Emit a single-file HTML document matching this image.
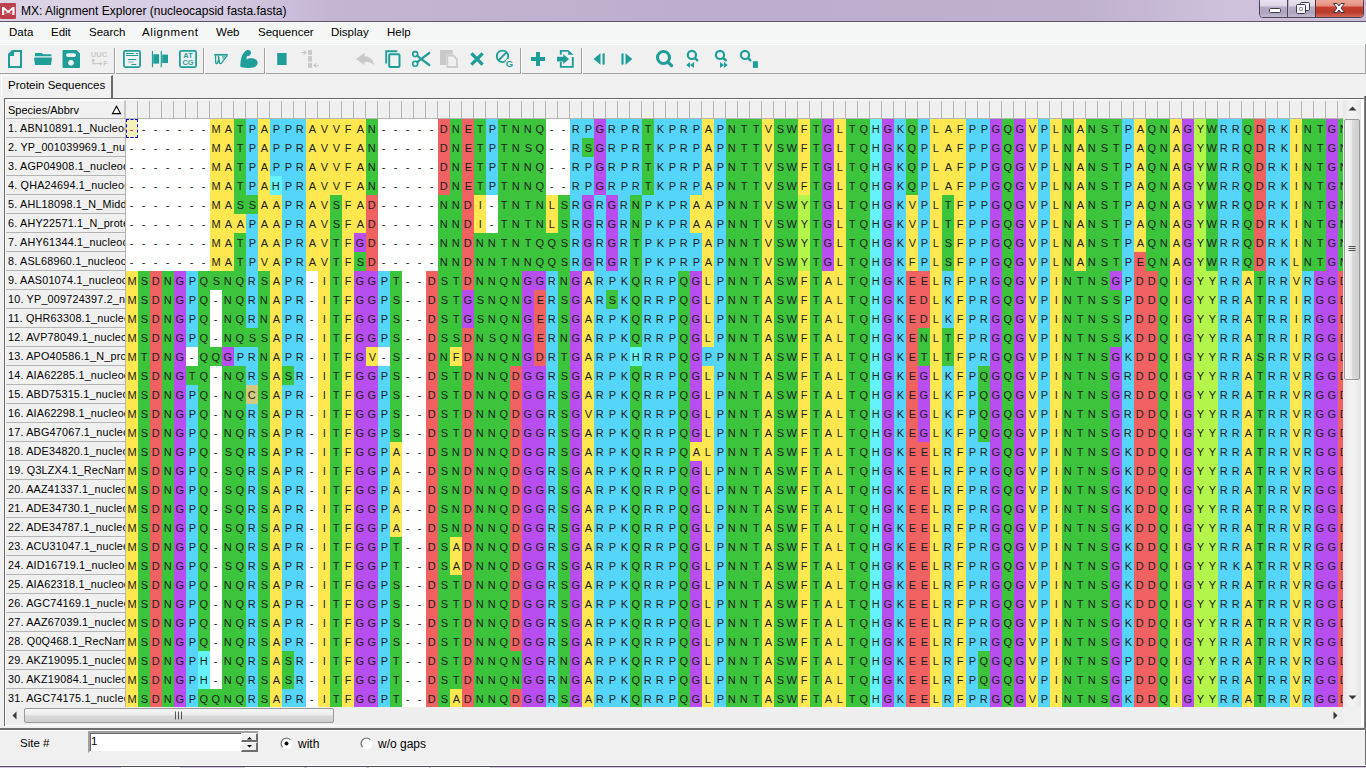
<!DOCTYPE html>
<html><head><meta charset="utf-8">
<style>
*{box-sizing:border-box}
html,body{margin:0;padding:0}
body{width:1366px;height:768px;overflow:hidden;background:#F0F0F0;position:relative;font-family:"Liberation Sans",sans-serif;color:#000}
.abs{position:absolute}
#title{left:0;top:0;width:1366px;height:22px;background:linear-gradient(90deg,#ddd4e6 0,#d6cce2 220px,#c4b5d4 330px,#bdaecf 700px,#bfb0d0 1080px,#cec2db 1230px,#c9bdd9 1366px);border-bottom:1px solid #5a5868}
#ttext{left:21px;top:4px;font-size:12px;white-space:nowrap}
#menu{left:0;top:22px;width:1366px;height:22px;background:#F5F7F7}
#menu span{position:absolute;top:4px;font-size:11.5px;white-space:nowrap}
#tool{left:0;top:44px;width:1366px;height:30px;background:#F0F0F0;border-top:1px solid #fff;border-bottom:1px solid #A0A0A0}
.sep{position:absolute;top:3px;width:2px;height:26px;border-left:1px solid #A0A0A0;border-right:1px solid #fff}
#tabs{left:0;top:74px;width:1366px;height:24px;background:#F0F0F0}
#tab{left:1px;top:75px;width:112px;height:23px;background:#F0F0F0;border-left:1px solid #fff;border-top:1px solid #fff;border-right:2px solid #696969}
#tabtxt{left:8px;top:79px;font-size:11.5px;white-space:nowrap}
#frame{left:4px;top:98px;width:1360px;height:628px;border-top:1px solid #696969;border-left:1px solid #696969;background:#fff}
#hdr{left:6px;top:100px;width:1337px;height:19px;background:#F0F0F0;border-bottom:1px solid #B4B4B4}
#hdrcells b{position:absolute;top:1px;width:1px;height:17px;background:#B4B4B4}
#hdrcells{left:126px;top:100px;width:1217px;height:18px;overflow:hidden}
#labhdr{left:6px;top:100px;width:120px;height:18px;border-top:1px solid #fff;border-right:2px solid #C8C8C8}
#labhdrtxt{left:8px;top:104px;font-size:11px;white-space:nowrap}
#grid{left:126px;top:119px;width:1217px;height:588px;overflow:hidden}
.row{position:absolute;left:0;height:19px;width:1224px;white-space:nowrap;font-size:10px;line-height:22px}
.row i{font-style:normal;display:inline-block;width:12px;height:19px;text-align:center;vertical-align:top}
.row b{font-weight:normal;display:inline-block;transform:scaleX(1.1);color:#1e1e1e}
.y{background:#FFE84F}.g{background:#3DC43D}.c{background:#55D5FA}.h{background:#66F2FA}.r{background:#F06262}.p{background:#B84EF0}.l{background:#B4F54B}.k{background:#D2CA7C}.w{background:#fff}
.row i.sel{background:#F4F2B8;outline:1px dashed #0000F0;outline-offset:-1px}
.row i.sel b{color:#f00}
#labs{left:6px;top:119px;width:120px;height:588px;overflow:hidden}
.lab{position:absolute;left:0;width:120px;height:19px;background:#F0F0F0;border-bottom:1px solid #B4B4B4;border-right:1px solid #B4B4B4;font-size:10.8px;line-height:19px;padding-left:2px;letter-spacing:0.2px;white-space:nowrap;overflow:hidden}
#vs{left:1343px;top:100px;width:18px;height:607px;background:linear-gradient(90deg,#e6e6e6,#f2f2f2 40%,#f2f2f2 60%,#e6e6e6)}
#hs{left:6px;top:707px;width:1355px;height:18px;background:#EEEEEE}
#bottomsep{left:0;top:728px;width:1366px;height:3px;border-top:2px solid #6e6e6e;border-bottom:1px solid #fff}
#sitetxt{left:20px;top:737px;font-size:11.5px}
#sitebox{left:88px;top:731px;width:171px;height:22px;background:#fff;border:2px solid;border-color:#a0a0a0 #f0f0f0 #f0f0f0 #a0a0a0;box-shadow:inset 1px 1px 0 #696969}
#sitev{left:91px;top:735px;font-size:11.5px}
</style></head><body>
<div id="title" class="abs"></div>
<div class="abs" style="left:0;top:3px;width:16px;height:16px;background:#BF404D;border-radius:1px"></div>
<svg class="abs" style="left:0;top:3px" width="16" height="16" viewBox="0 0 16 16"><path d="M2,4 H4.2 V12 H2 Z M12.3,4 H14.5 V12 H12.3 Z" fill="#fff"/><path d="M3.3,4.6 L8.2,9 L13.2,4.6" fill="none" stroke="#fff" stroke-width="1.7"/><path d="M5.6,10.5 L8.2,9 L10.8,10.5" fill="none" stroke="#f4d8dc" stroke-width="0.9"/></svg>
<div class="abs" style="left:1259px;top:-3px;width:105px;height:21px;border:1px solid #4a4656;border-radius:4px;overflow:hidden;background:#bcb2cc">
<div class="abs" style="left:0;top:0;width:28px;height:20px;background:linear-gradient(#ebe6f0 0,#ddd6e6 40%,#b5abc4 45%,#aea4bf 75%,#c9c0d6 100%);border-right:1px solid #4a4656"></div>
<div class="abs" style="left:29px;top:0;width:27px;height:20px;background:linear-gradient(#ebe6f0 0,#ddd6e6 40%,#b5abc4 45%,#aea4bf 75%,#c9c0d6 100%);border-right:1px solid #5a3030"></div>
<div class="abs" style="left:56px;top:0;width:48px;height:20px;background:linear-gradient(#f0b0a0 0,#e49080 40%,#c84030 45%,#b83a2a 70%,#d87060 100%)"></div>
</div>
<svg class="abs" style="left:1260px;top:0" width="106" height="20" viewBox="0 0 106 20">
<rect x="9.5" y="8.5" width="11" height="4" rx="1" fill="#fff" stroke="#3c3a4a" stroke-width="1"/>
<rect x="40.5" y="2.5" width="9" height="8" rx="1" fill="#f4f2f8" stroke="#3c3a4a" stroke-width="1"/>
<rect x="36.5" y="4.5" width="9" height="9" rx="1" fill="#f4f2f8" stroke="#3c3a4a" stroke-width="1"/>
<rect x="39.5" y="7.5" width="3" height="3" fill="#3c3a4a" stroke="none"/>
<rect x="40" y="8" width="2" height="2" fill="#f4f2f8"/>
<path d="M73.5,3.5 H77 L79,6 L81,3.5 H84.5 L81,8 L84.5,12.5 H81 L79,10 L77,12.5 H73.5 L77,8 Z" fill="#fff" stroke="#3c3a4a" stroke-width="1" stroke-linejoin="round"/>
</svg>
<div id="ttext" class="abs">MX: Alignment Explorer (nucleocapsid fasta.fasta)</div>

<div id="menu" class="abs">
<span style="left:9px">Data</span><span style="left:51px">Edit</span><span style="left:89px">Search</span><span style="left:142px;letter-spacing:0.6px">Alignment</span><span style="left:216px">Web</span><span style="left:258px">Sequencer</span><span style="left:331px">Display</span><span style="left:387px">Help</span>
</div>
<div id="tool" class="abs">
<div class="sep" style="left:114px"></div><div class="sep" style="left:203px"></div><div class="sep" style="left:264px"></div><div class="sep" style="left:520px"></div><div class="sep" style="left:581px"></div>
</div>
<svg class="abs" style="left:0;top:0" width="780" height="74" viewBox="0 0 780 74">
<g fill="#1F9E99" stroke="none">
<path fill-rule="evenodd" d="M8,54 L12,50 H22 V68 H8 Z M10,56 H14 V52 H20 V66 H10 Z"/>
<path d="M35,53 H42 L43,54.2 H50.5 Q51.5,54.2 51.5,55.2 V56.3 H35 Z"/>
<path d="M34,57.6 H52 L51,65 H35 Z"/>
<path fill-rule="evenodd" d="M62.5,51 Q62.5,50 63.5,50 H76.5 L80,53.5 V67 Q80,68 79,68 H63.5 Q62.5,68 62.5,67 Z M68,53.2 H74 Q76,53.2 76,55.1 Q76,57 74,57 H68 Q66,57 66,55.1 Q66,53.2 68,53.2 Z M71,60 A2.9,2.9 0 1 0 71.01,60 Z"/>
</g>
<g fill="none" stroke="#1F9E99">
<rect x="123.9" y="50.9" width="16.2" height="16.2" rx="1.5" stroke-width="1.8"/>
<path d="M126.6,53.5 H133.4 M136.4,53.5 H137.8 M126.6,55.5 H137.8 M128.4,59.5 H135.8 M132,64.5 H135.8" stroke-width="1.2" stroke-linecap="round"/>
<path d="M128.4,62 H133.6" stroke-width="1.2" stroke="#7cc3bf"/>
<rect x="179.9" y="50.9" width="16.2" height="16.2" rx="1.5" stroke-width="1.8"/>
<path d="M152.5,51.3 V66.7 M161.3,51.3 V66.7" stroke-width="1.2" stroke-linecap="round"/>
</g>
<g fill="#1F9E99">
<rect x="153.3" y="54.2" width="5.8" height="9.4"/>
<rect x="162.2" y="54.6" width="5.8" height="8.4"/>
<text x="188" y="57.9" font-family="Liberation Sans" font-weight="bold" font-size="7.4" text-anchor="middle">AT</text>
<text x="188" y="65.2" font-family="Liberation Sans" font-weight="bold" font-size="7.4" text-anchor="middle">CG</text>
<path d="M214.2,54.8 H227.8" stroke="#1F9E99" stroke-width="1.7"/><path d="M215.5,55.5 L215.7,63 Q216.2,63.9 217.1,63.5 L218.7,59.8 L219.5,63.3 Q220.3,63.9 221.2,63.3 L227.2,55.6" fill="none" stroke="#1F9E99" stroke-width="1.3" stroke-linejoin="round"/><path d="M218.4,56 L219.3,62.5" stroke="#1F9E99" stroke-width="1.5"/><path d="M221.8,55.6 H226.3 L222.8,60 Z" fill="#6fbdb9"/>
<path d="M240.3,66.5 C240.5,60 241.5,55 244.5,52 C245.8,50.6 247,50 248.3,50 C250,50 251,51 251,52.6 C251,54.2 250.3,55.5 248.8,55.9 L246.8,56.3 L246.5,59.8 C247.2,58.9 248.2,58.3 249.5,58.2 C254,57.8 257.6,59.5 257.6,62.8 C257.6,66.2 254.5,67.8 249,67.9 C245,68 242,67.6 240.3,66.5 Z"/>
<rect x="277.2" y="53" width="9.4" height="12"/>
</g>
<g fill="#C9C9C9">
<text x="99" y="56.8" font-family="Liberation Sans" font-weight="bold" font-size="7.6" text-anchor="middle">UUC</text>
<text x="105.5" y="65.6" font-family="Liberation Sans" font-weight="bold" font-size="7.3" text-anchor="middle">F</text>
<path d="M93.1,58.2 L91,61 H92.4 V64.3 H100 V65.8 L102.6,63.6 L100,61.4 V62.9 H93.8 V61 H95.2 Z"/>
<rect x="308" y="50" width="4" height="4.8"/><rect x="308" y="56.1" width="4" height="5.5"/><rect x="308" y="62.9" width="4" height="4.9"/>
<path d="M301,52 H304.5 L303,50.6 L304,50.2 L306.9,52.5 L304,54.8 L303,54.4 L304.5,53 H301 Z"/>
<path d="M319,64.9 H315.5 L317,63.5 L316,63.1 L313,65.4 L316,67.7 L317,67.3 L315.5,65.9 H319 Z"/>
<path d="M356,59 L364.5,52.8 V56.2 C369,56.2 373.5,59 374,65 C371.5,62.5 368,62 364.5,62 V65 Z"/>
<path d="M440,50 H452.8 V54.5 H446.4 V65.1 H440 Z"/>
</g>
<g fill="none" stroke="#CDCDCD" stroke-width="1.8">
<path d="M447.3,55.5 H453.5 L457,59 V67 H447.3 Z"/>
</g>
<g fill="none" stroke="#1F9E99">
<path d="M386.2,62.8 V51.2 H396.5" stroke-width="1.9" stroke-linecap="round"/>
<rect x="389.2" y="54.3" width="10.3" height="12.6" rx="1" stroke-width="2"/>
<circle cx="415.2" cy="54.1" r="2.5" stroke-width="1.6"/>
<circle cx="415.2" cy="63.8" r="2.5" stroke-width="1.6"/>
<path d="M417.3,55.7 L421,59 L429.3,65 M417.3,62.2 L421,59 L429.3,53" stroke-width="2.2" stroke-linecap="round"/>
<path d="M472.5,54.5 L481.5,63.5 M481.5,54.5 L472.5,63.5" stroke-width="3.2" stroke-linecap="square"/>
<circle cx="502.5" cy="56.3" r="5.75" stroke-width="1.8"/>
<path d="M498.8,60 L506.2,52.6" stroke-width="1.8"/>
<path d="M531,59 H545 M538,52 V66" stroke-width="4"/>
<path d="M560.8,54.8 V50.9 H568.5 M572.8,57 V66.9 H560.8 V62" stroke-width="1.9"/>
<circle cx="663.5" cy="57.5" r="6" stroke-width="3.1"/>
<path d="M667.8,62 L671.6,65.6" stroke-width="3.2" stroke-linecap="round"/>
<circle cx="691.9" cy="54.9" r="4.1" stroke-width="2.2"/>
<path d="M695,58.2 L697.3,60.3" stroke-width="2.4" stroke-linecap="round"/>
<circle cx="720" cy="54.9" r="4.1" stroke-width="2.2"/>
<path d="M723.1,58.2 L725.9,60.3" stroke-width="2.4" stroke-linecap="round"/>
<circle cx="745" cy="54.9" r="4.1" stroke-width="2.2"/>
<path d="M748.1,58.2 L750.3,60.3" stroke-width="2.4" stroke-linecap="round"/>
</g>
<g fill="#1F9E99">
<path d="M568.2,50 L573.6,54.8 H568.2 Z"/>
<path d="M557,56.8 H563.3 V54.2 L569,59.1 L563.3,64 V61.6 H557 Z"/>
<path d="M593.5,59 L600.5,53.3 V64.7 Z"/><rect x="602.5" y="53.3" width="2.2" height="11.4" rx="1"/>
<path d="M632.3,59 L625.5,53.3 V64.7 Z"/><rect x="621.4" y="53.3" width="2.2" height="11.4" rx="1"/>
<path d="M686.2,65 L690,62 V68 Z M690,65 L694,62 V68 Z"/>
<path d="M727.7,65 L724,62 V68 Z M724,65 L720,62 V68 Z"/>
<rect x="752.9" y="61.2" width="5" height="6.7"/>
<circle cx="509.3" cy="62.6" r="3.9" fill="#F0F0F0"/>
<text x="509.4" y="66.6" font-family="Liberation Sans" font-weight="bold" font-size="9.5" text-anchor="middle">G</text>
</g>
</svg>
<div id="tabs" class="abs"></div>
<div id="tab" class="abs"></div>
<div id="tabtxt" class="abs">Protein Sequences</div>

<div id="frame" class="abs"></div>
<div id="hdr" class="abs"></div>
<div id="hdrcells" class="abs"><div style="position:relative;height:18px"><b style="left:11px"></b><b style="left:23px"></b><b style="left:35px"></b><b style="left:47px"></b><b style="left:59px"></b><b style="left:71px"></b><b style="left:83px"></b><b style="left:95px"></b><b style="left:107px"></b><b style="left:119px"></b><b style="left:131px"></b><b style="left:143px"></b><b style="left:155px"></b><b style="left:167px"></b><b style="left:179px"></b><b style="left:191px"></b><b style="left:203px"></b><b style="left:215px"></b><b style="left:227px"></b><b style="left:239px"></b><b style="left:251px"></b><b style="left:263px"></b><b style="left:275px"></b><b style="left:287px"></b><b style="left:299px"></b><b style="left:311px"></b><b style="left:323px"></b><b style="left:335px"></b><b style="left:347px"></b><b style="left:359px"></b><b style="left:371px"></b><b style="left:383px"></b><b style="left:395px"></b><b style="left:407px"></b><b style="left:419px"></b><b style="left:431px"></b><b style="left:443px"></b><b style="left:455px"></b><b style="left:467px"></b><b style="left:479px"></b><b style="left:491px"></b><b style="left:503px"></b><b style="left:515px"></b><b style="left:527px"></b><b style="left:539px"></b><b style="left:551px"></b><b style="left:563px"></b><b style="left:575px"></b><b style="left:587px"></b><b style="left:599px"></b><b style="left:611px"></b><b style="left:623px"></b><b style="left:635px"></b><b style="left:647px"></b><b style="left:659px"></b><b style="left:671px"></b><b style="left:683px"></b><b style="left:695px"></b><b style="left:707px"></b><b style="left:719px"></b><b style="left:731px"></b><b style="left:743px"></b><b style="left:755px"></b><b style="left:767px"></b><b style="left:779px"></b><b style="left:791px"></b><b style="left:803px"></b><b style="left:815px"></b><b style="left:827px"></b><b style="left:839px"></b><b style="left:851px"></b><b style="left:863px"></b><b style="left:875px"></b><b style="left:887px"></b><b style="left:899px"></b><b style="left:911px"></b><b style="left:923px"></b><b style="left:935px"></b><b style="left:947px"></b><b style="left:959px"></b><b style="left:971px"></b><b style="left:983px"></b><b style="left:995px"></b><b style="left:1007px"></b><b style="left:1019px"></b><b style="left:1031px"></b><b style="left:1043px"></b><b style="left:1055px"></b><b style="left:1067px"></b><b style="left:1079px"></b><b style="left:1091px"></b><b style="left:1103px"></b><b style="left:1115px"></b><b style="left:1127px"></b><b style="left:1139px"></b><b style="left:1151px"></b><b style="left:1163px"></b><b style="left:1175px"></b><b style="left:1187px"></b><b style="left:1199px"></b><b style="left:1211px"></b><b style="left:1223px"></b></div></div>
<div id="labhdr" class="abs"></div>
<div id="labhdrtxt" class="abs">Species/Abbrv</div>
<svg class="abs" style="left:111px;top:105px" width="12" height="10" viewBox="0 0 12 10"><path d="M5.5 1.2 1.5 8.6h8z" fill="#fff" stroke="#000" stroke-width="1.1"/></svg>
<div id="grid" class="abs">
<div class="row" style="top:0px"><i class="sel"><b>-</b></i><i class="w"><b>-</b></i><i class="w"><b>-</b></i><i class="w"><b>-</b></i><i class="w"><b>-</b></i><i class="w"><b>-</b></i><i class="w"><b>-</b></i><i class="y"><b>M</b></i><i class="y"><b>A</b></i><i class="g"><b>T</b></i><i class="c"><b>P</b></i><i class="y"><b>A</b></i><i class="c"><b>P</b></i><i class="c"><b>P</b></i><i class="c"><b>R</b></i><i class="y"><b>A</b></i><i class="y"><b>V</b></i><i class="y"><b>V</b></i><i class="y"><b>F</b></i><i class="y"><b>A</b></i><i class="g"><b>N</b></i><i class="w"><b>-</b></i><i class="w"><b>-</b></i><i class="w"><b>-</b></i><i class="w"><b>-</b></i><i class="w"><b>-</b></i><i class="r"><b>D</b></i><i class="g"><b>N</b></i><i class="r"><b>E</b></i><i class="g"><b>T</b></i><i class="c"><b>P</b></i><i class="g"><b>T</b></i><i class="g"><b>N</b></i><i class="g"><b>N</b></i><i class="g"><b>Q</b></i><i class="w"><b>-</b></i><i class="w"><b>-</b></i><i class="c"><b>R</b></i><i class="c"><b>P</b></i><i class="p"><b>G</b></i><i class="c"><b>R</b></i><i class="c"><b>P</b></i><i class="c"><b>R</b></i><i class="g"><b>T</b></i><i class="c"><b>K</b></i><i class="c"><b>P</b></i><i class="c"><b>R</b></i><i class="c"><b>P</b></i><i class="y"><b>A</b></i><i class="c"><b>P</b></i><i class="g"><b>N</b></i><i class="g"><b>T</b></i><i class="g"><b>T</b></i><i class="y"><b>V</b></i><i class="g"><b>S</b></i><i class="g"><b>W</b></i><i class="y"><b>F</b></i><i class="g"><b>T</b></i><i class="p"><b>G</b></i><i class="y"><b>L</b></i><i class="g"><b>T</b></i><i class="g"><b>Q</b></i><i class="h"><b>H</b></i><i class="p"><b>G</b></i><i class="c"><b>K</b></i><i class="g"><b>Q</b></i><i class="c"><b>P</b></i><i class="y"><b>L</b></i><i class="y"><b>A</b></i><i class="y"><b>F</b></i><i class="c"><b>P</b></i><i class="c"><b>P</b></i><i class="p"><b>G</b></i><i class="g"><b>Q</b></i><i class="p"><b>G</b></i><i class="y"><b>V</b></i><i class="c"><b>P</b></i><i class="y"><b>L</b></i><i class="g"><b>N</b></i><i class="y"><b>A</b></i><i class="g"><b>N</b></i><i class="g"><b>S</b></i><i class="g"><b>T</b></i><i class="c"><b>P</b></i><i class="y"><b>A</b></i><i class="g"><b>Q</b></i><i class="g"><b>N</b></i><i class="y"><b>A</b></i><i class="p"><b>G</b></i><i class="l"><b>Y</b></i><i class="g"><b>W</b></i><i class="c"><b>R</b></i><i class="c"><b>R</b></i><i class="g"><b>Q</b></i><i class="r"><b>D</b></i><i class="c"><b>R</b></i><i class="c"><b>K</b></i><i class="y"><b>I</b></i><i class="g"><b>N</b></i><i class="g"><b>T</b></i><i class="p"><b>G</b></i><i class="g"><b>N</b></i></div>
<div class="row" style="top:19px"><i class="w"><b>-</b></i><i class="w"><b>-</b></i><i class="w"><b>-</b></i><i class="w"><b>-</b></i><i class="w"><b>-</b></i><i class="w"><b>-</b></i><i class="w"><b>-</b></i><i class="y"><b>M</b></i><i class="y"><b>A</b></i><i class="g"><b>T</b></i><i class="c"><b>P</b></i><i class="y"><b>A</b></i><i class="c"><b>P</b></i><i class="c"><b>P</b></i><i class="c"><b>R</b></i><i class="y"><b>A</b></i><i class="y"><b>V</b></i><i class="y"><b>V</b></i><i class="y"><b>F</b></i><i class="y"><b>A</b></i><i class="g"><b>N</b></i><i class="w"><b>-</b></i><i class="w"><b>-</b></i><i class="w"><b>-</b></i><i class="w"><b>-</b></i><i class="w"><b>-</b></i><i class="r"><b>D</b></i><i class="g"><b>N</b></i><i class="r"><b>E</b></i><i class="g"><b>T</b></i><i class="c"><b>P</b></i><i class="g"><b>T</b></i><i class="g"><b>N</b></i><i class="g"><b>S</b></i><i class="g"><b>Q</b></i><i class="w"><b>-</b></i><i class="w"><b>-</b></i><i class="c"><b>R</b></i><i class="g"><b>S</b></i><i class="p"><b>G</b></i><i class="c"><b>R</b></i><i class="c"><b>P</b></i><i class="c"><b>R</b></i><i class="g"><b>T</b></i><i class="c"><b>K</b></i><i class="c"><b>P</b></i><i class="c"><b>R</b></i><i class="c"><b>P</b></i><i class="y"><b>A</b></i><i class="c"><b>P</b></i><i class="g"><b>N</b></i><i class="g"><b>T</b></i><i class="g"><b>T</b></i><i class="y"><b>V</b></i><i class="g"><b>S</b></i><i class="g"><b>W</b></i><i class="y"><b>F</b></i><i class="g"><b>T</b></i><i class="p"><b>G</b></i><i class="y"><b>L</b></i><i class="g"><b>T</b></i><i class="g"><b>Q</b></i><i class="h"><b>H</b></i><i class="p"><b>G</b></i><i class="c"><b>K</b></i><i class="g"><b>Q</b></i><i class="c"><b>P</b></i><i class="y"><b>L</b></i><i class="y"><b>A</b></i><i class="y"><b>F</b></i><i class="c"><b>P</b></i><i class="c"><b>P</b></i><i class="p"><b>G</b></i><i class="g"><b>Q</b></i><i class="p"><b>G</b></i><i class="y"><b>V</b></i><i class="c"><b>P</b></i><i class="y"><b>L</b></i><i class="g"><b>N</b></i><i class="y"><b>A</b></i><i class="g"><b>N</b></i><i class="g"><b>S</b></i><i class="g"><b>T</b></i><i class="c"><b>P</b></i><i class="y"><b>A</b></i><i class="g"><b>Q</b></i><i class="g"><b>N</b></i><i class="y"><b>A</b></i><i class="p"><b>G</b></i><i class="l"><b>Y</b></i><i class="g"><b>W</b></i><i class="c"><b>R</b></i><i class="c"><b>R</b></i><i class="g"><b>Q</b></i><i class="r"><b>D</b></i><i class="c"><b>R</b></i><i class="c"><b>K</b></i><i class="y"><b>I</b></i><i class="g"><b>N</b></i><i class="g"><b>T</b></i><i class="p"><b>G</b></i><i class="g"><b>N</b></i></div>
<div class="row" style="top:38px"><i class="w"><b>-</b></i><i class="w"><b>-</b></i><i class="w"><b>-</b></i><i class="w"><b>-</b></i><i class="w"><b>-</b></i><i class="w"><b>-</b></i><i class="w"><b>-</b></i><i class="y"><b>M</b></i><i class="y"><b>A</b></i><i class="g"><b>T</b></i><i class="c"><b>P</b></i><i class="y"><b>A</b></i><i class="c"><b>P</b></i><i class="c"><b>P</b></i><i class="c"><b>R</b></i><i class="y"><b>A</b></i><i class="y"><b>V</b></i><i class="y"><b>V</b></i><i class="y"><b>F</b></i><i class="y"><b>A</b></i><i class="g"><b>N</b></i><i class="w"><b>-</b></i><i class="w"><b>-</b></i><i class="w"><b>-</b></i><i class="w"><b>-</b></i><i class="w"><b>-</b></i><i class="r"><b>D</b></i><i class="g"><b>N</b></i><i class="r"><b>E</b></i><i class="g"><b>T</b></i><i class="c"><b>P</b></i><i class="g"><b>T</b></i><i class="g"><b>N</b></i><i class="g"><b>N</b></i><i class="g"><b>Q</b></i><i class="w"><b>-</b></i><i class="w"><b>-</b></i><i class="c"><b>R</b></i><i class="c"><b>P</b></i><i class="p"><b>G</b></i><i class="c"><b>R</b></i><i class="c"><b>P</b></i><i class="c"><b>R</b></i><i class="g"><b>T</b></i><i class="c"><b>K</b></i><i class="c"><b>P</b></i><i class="c"><b>R</b></i><i class="c"><b>P</b></i><i class="y"><b>A</b></i><i class="c"><b>P</b></i><i class="g"><b>N</b></i><i class="g"><b>T</b></i><i class="g"><b>T</b></i><i class="y"><b>V</b></i><i class="g"><b>S</b></i><i class="g"><b>W</b></i><i class="y"><b>F</b></i><i class="g"><b>T</b></i><i class="p"><b>G</b></i><i class="y"><b>L</b></i><i class="g"><b>T</b></i><i class="g"><b>Q</b></i><i class="h"><b>H</b></i><i class="p"><b>G</b></i><i class="c"><b>K</b></i><i class="g"><b>Q</b></i><i class="c"><b>P</b></i><i class="y"><b>L</b></i><i class="y"><b>A</b></i><i class="y"><b>F</b></i><i class="c"><b>P</b></i><i class="c"><b>P</b></i><i class="p"><b>G</b></i><i class="g"><b>Q</b></i><i class="p"><b>G</b></i><i class="y"><b>V</b></i><i class="c"><b>P</b></i><i class="y"><b>L</b></i><i class="g"><b>N</b></i><i class="y"><b>A</b></i><i class="g"><b>N</b></i><i class="g"><b>S</b></i><i class="g"><b>T</b></i><i class="c"><b>P</b></i><i class="y"><b>A</b></i><i class="g"><b>Q</b></i><i class="g"><b>N</b></i><i class="y"><b>A</b></i><i class="p"><b>G</b></i><i class="l"><b>Y</b></i><i class="g"><b>W</b></i><i class="c"><b>R</b></i><i class="c"><b>R</b></i><i class="g"><b>Q</b></i><i class="r"><b>D</b></i><i class="c"><b>R</b></i><i class="c"><b>K</b></i><i class="y"><b>I</b></i><i class="g"><b>N</b></i><i class="g"><b>T</b></i><i class="p"><b>G</b></i><i class="g"><b>N</b></i></div>
<div class="row" style="top:57px"><i class="w"><b>-</b></i><i class="w"><b>-</b></i><i class="w"><b>-</b></i><i class="w"><b>-</b></i><i class="w"><b>-</b></i><i class="w"><b>-</b></i><i class="w"><b>-</b></i><i class="y"><b>M</b></i><i class="y"><b>A</b></i><i class="g"><b>T</b></i><i class="c"><b>P</b></i><i class="y"><b>A</b></i><i class="h"><b>H</b></i><i class="c"><b>P</b></i><i class="c"><b>R</b></i><i class="y"><b>A</b></i><i class="y"><b>V</b></i><i class="y"><b>V</b></i><i class="y"><b>F</b></i><i class="y"><b>A</b></i><i class="g"><b>N</b></i><i class="w"><b>-</b></i><i class="w"><b>-</b></i><i class="w"><b>-</b></i><i class="w"><b>-</b></i><i class="w"><b>-</b></i><i class="r"><b>D</b></i><i class="g"><b>N</b></i><i class="r"><b>E</b></i><i class="g"><b>T</b></i><i class="c"><b>P</b></i><i class="g"><b>T</b></i><i class="g"><b>N</b></i><i class="g"><b>N</b></i><i class="g"><b>Q</b></i><i class="w"><b>-</b></i><i class="w"><b>-</b></i><i class="c"><b>R</b></i><i class="c"><b>P</b></i><i class="p"><b>G</b></i><i class="c"><b>R</b></i><i class="c"><b>P</b></i><i class="c"><b>R</b></i><i class="g"><b>T</b></i><i class="c"><b>K</b></i><i class="c"><b>P</b></i><i class="c"><b>R</b></i><i class="c"><b>P</b></i><i class="y"><b>A</b></i><i class="c"><b>P</b></i><i class="g"><b>N</b></i><i class="g"><b>T</b></i><i class="g"><b>T</b></i><i class="y"><b>V</b></i><i class="g"><b>S</b></i><i class="g"><b>W</b></i><i class="y"><b>F</b></i><i class="g"><b>T</b></i><i class="p"><b>G</b></i><i class="y"><b>L</b></i><i class="g"><b>T</b></i><i class="g"><b>Q</b></i><i class="h"><b>H</b></i><i class="p"><b>G</b></i><i class="c"><b>K</b></i><i class="g"><b>Q</b></i><i class="c"><b>P</b></i><i class="y"><b>L</b></i><i class="y"><b>A</b></i><i class="y"><b>F</b></i><i class="c"><b>P</b></i><i class="c"><b>P</b></i><i class="p"><b>G</b></i><i class="g"><b>Q</b></i><i class="p"><b>G</b></i><i class="y"><b>V</b></i><i class="c"><b>P</b></i><i class="y"><b>L</b></i><i class="g"><b>N</b></i><i class="y"><b>A</b></i><i class="g"><b>N</b></i><i class="g"><b>S</b></i><i class="g"><b>T</b></i><i class="c"><b>P</b></i><i class="y"><b>A</b></i><i class="g"><b>Q</b></i><i class="g"><b>N</b></i><i class="y"><b>A</b></i><i class="p"><b>G</b></i><i class="l"><b>Y</b></i><i class="g"><b>W</b></i><i class="c"><b>R</b></i><i class="c"><b>R</b></i><i class="g"><b>Q</b></i><i class="r"><b>D</b></i><i class="c"><b>R</b></i><i class="c"><b>K</b></i><i class="y"><b>I</b></i><i class="g"><b>N</b></i><i class="g"><b>T</b></i><i class="p"><b>G</b></i><i class="g"><b>N</b></i></div>
<div class="row" style="top:76px"><i class="w"><b>-</b></i><i class="w"><b>-</b></i><i class="w"><b>-</b></i><i class="w"><b>-</b></i><i class="w"><b>-</b></i><i class="w"><b>-</b></i><i class="w"><b>-</b></i><i class="y"><b>M</b></i><i class="y"><b>A</b></i><i class="g"><b>S</b></i><i class="g"><b>S</b></i><i class="y"><b>A</b></i><i class="y"><b>A</b></i><i class="c"><b>P</b></i><i class="c"><b>R</b></i><i class="y"><b>A</b></i><i class="y"><b>V</b></i><i class="g"><b>S</b></i><i class="y"><b>F</b></i><i class="y"><b>A</b></i><i class="r"><b>D</b></i><i class="w"><b>-</b></i><i class="w"><b>-</b></i><i class="w"><b>-</b></i><i class="w"><b>-</b></i><i class="w"><b>-</b></i><i class="g"><b>N</b></i><i class="g"><b>N</b></i><i class="r"><b>D</b></i><i class="y"><b>I</b></i><i class="w"><b>-</b></i><i class="g"><b>T</b></i><i class="g"><b>N</b></i><i class="g"><b>T</b></i><i class="g"><b>N</b></i><i class="y"><b>L</b></i><i class="g"><b>S</b></i><i class="c"><b>R</b></i><i class="p"><b>G</b></i><i class="c"><b>R</b></i><i class="p"><b>G</b></i><i class="c"><b>R</b></i><i class="g"><b>N</b></i><i class="c"><b>P</b></i><i class="c"><b>K</b></i><i class="c"><b>P</b></i><i class="c"><b>R</b></i><i class="y"><b>A</b></i><i class="y"><b>A</b></i><i class="c"><b>P</b></i><i class="g"><b>N</b></i><i class="g"><b>N</b></i><i class="g"><b>T</b></i><i class="y"><b>V</b></i><i class="g"><b>S</b></i><i class="g"><b>W</b></i><i class="l"><b>Y</b></i><i class="g"><b>T</b></i><i class="p"><b>G</b></i><i class="y"><b>L</b></i><i class="g"><b>T</b></i><i class="g"><b>Q</b></i><i class="h"><b>H</b></i><i class="p"><b>G</b></i><i class="c"><b>K</b></i><i class="y"><b>V</b></i><i class="c"><b>P</b></i><i class="y"><b>L</b></i><i class="g"><b>T</b></i><i class="y"><b>F</b></i><i class="c"><b>P</b></i><i class="c"><b>P</b></i><i class="p"><b>G</b></i><i class="g"><b>Q</b></i><i class="p"><b>G</b></i><i class="y"><b>V</b></i><i class="c"><b>P</b></i><i class="y"><b>L</b></i><i class="g"><b>N</b></i><i class="y"><b>A</b></i><i class="g"><b>N</b></i><i class="g"><b>S</b></i><i class="g"><b>T</b></i><i class="c"><b>P</b></i><i class="y"><b>A</b></i><i class="g"><b>Q</b></i><i class="g"><b>N</b></i><i class="y"><b>A</b></i><i class="p"><b>G</b></i><i class="l"><b>Y</b></i><i class="g"><b>W</b></i><i class="c"><b>R</b></i><i class="c"><b>R</b></i><i class="g"><b>Q</b></i><i class="r"><b>D</b></i><i class="c"><b>R</b></i><i class="c"><b>K</b></i><i class="y"><b>I</b></i><i class="g"><b>N</b></i><i class="g"><b>T</b></i><i class="p"><b>G</b></i><i class="g"><b>N</b></i></div>
<div class="row" style="top:95px"><i class="w"><b>-</b></i><i class="w"><b>-</b></i><i class="w"><b>-</b></i><i class="w"><b>-</b></i><i class="w"><b>-</b></i><i class="w"><b>-</b></i><i class="w"><b>-</b></i><i class="y"><b>M</b></i><i class="y"><b>A</b></i><i class="y"><b>A</b></i><i class="c"><b>P</b></i><i class="y"><b>A</b></i><i class="y"><b>A</b></i><i class="c"><b>P</b></i><i class="c"><b>R</b></i><i class="y"><b>A</b></i><i class="y"><b>V</b></i><i class="g"><b>S</b></i><i class="y"><b>F</b></i><i class="y"><b>A</b></i><i class="r"><b>D</b></i><i class="w"><b>-</b></i><i class="w"><b>-</b></i><i class="w"><b>-</b></i><i class="w"><b>-</b></i><i class="w"><b>-</b></i><i class="g"><b>N</b></i><i class="g"><b>N</b></i><i class="r"><b>D</b></i><i class="y"><b>I</b></i><i class="w"><b>-</b></i><i class="g"><b>T</b></i><i class="g"><b>N</b></i><i class="g"><b>T</b></i><i class="g"><b>N</b></i><i class="y"><b>L</b></i><i class="g"><b>S</b></i><i class="c"><b>R</b></i><i class="p"><b>G</b></i><i class="c"><b>R</b></i><i class="p"><b>G</b></i><i class="c"><b>R</b></i><i class="g"><b>N</b></i><i class="c"><b>P</b></i><i class="c"><b>K</b></i><i class="c"><b>P</b></i><i class="c"><b>R</b></i><i class="y"><b>A</b></i><i class="y"><b>A</b></i><i class="c"><b>P</b></i><i class="g"><b>N</b></i><i class="g"><b>N</b></i><i class="g"><b>T</b></i><i class="y"><b>V</b></i><i class="g"><b>S</b></i><i class="g"><b>W</b></i><i class="l"><b>Y</b></i><i class="g"><b>T</b></i><i class="p"><b>G</b></i><i class="y"><b>L</b></i><i class="g"><b>T</b></i><i class="g"><b>Q</b></i><i class="h"><b>H</b></i><i class="p"><b>G</b></i><i class="c"><b>K</b></i><i class="y"><b>V</b></i><i class="c"><b>P</b></i><i class="y"><b>L</b></i><i class="g"><b>T</b></i><i class="y"><b>F</b></i><i class="c"><b>P</b></i><i class="c"><b>P</b></i><i class="p"><b>G</b></i><i class="g"><b>Q</b></i><i class="p"><b>G</b></i><i class="y"><b>V</b></i><i class="c"><b>P</b></i><i class="y"><b>L</b></i><i class="g"><b>N</b></i><i class="y"><b>A</b></i><i class="g"><b>N</b></i><i class="g"><b>S</b></i><i class="g"><b>T</b></i><i class="c"><b>P</b></i><i class="y"><b>A</b></i><i class="g"><b>Q</b></i><i class="g"><b>N</b></i><i class="y"><b>A</b></i><i class="p"><b>G</b></i><i class="l"><b>Y</b></i><i class="g"><b>W</b></i><i class="c"><b>R</b></i><i class="c"><b>R</b></i><i class="g"><b>Q</b></i><i class="r"><b>D</b></i><i class="c"><b>R</b></i><i class="c"><b>K</b></i><i class="y"><b>I</b></i><i class="g"><b>N</b></i><i class="g"><b>T</b></i><i class="p"><b>G</b></i><i class="g"><b>N</b></i></div>
<div class="row" style="top:114px"><i class="w"><b>-</b></i><i class="w"><b>-</b></i><i class="w"><b>-</b></i><i class="w"><b>-</b></i><i class="w"><b>-</b></i><i class="w"><b>-</b></i><i class="w"><b>-</b></i><i class="y"><b>M</b></i><i class="y"><b>A</b></i><i class="g"><b>T</b></i><i class="c"><b>P</b></i><i class="y"><b>A</b></i><i class="y"><b>A</b></i><i class="c"><b>P</b></i><i class="c"><b>R</b></i><i class="y"><b>A</b></i><i class="y"><b>V</b></i><i class="g"><b>T</b></i><i class="y"><b>F</b></i><i class="p"><b>G</b></i><i class="r"><b>D</b></i><i class="w"><b>-</b></i><i class="w"><b>-</b></i><i class="w"><b>-</b></i><i class="w"><b>-</b></i><i class="w"><b>-</b></i><i class="g"><b>N</b></i><i class="g"><b>N</b></i><i class="r"><b>D</b></i><i class="g"><b>N</b></i><i class="g"><b>N</b></i><i class="g"><b>T</b></i><i class="g"><b>N</b></i><i class="g"><b>T</b></i><i class="g"><b>Q</b></i><i class="g"><b>Q</b></i><i class="g"><b>S</b></i><i class="c"><b>R</b></i><i class="p"><b>G</b></i><i class="c"><b>R</b></i><i class="p"><b>G</b></i><i class="c"><b>R</b></i><i class="g"><b>T</b></i><i class="c"><b>P</b></i><i class="c"><b>K</b></i><i class="c"><b>P</b></i><i class="c"><b>R</b></i><i class="c"><b>P</b></i><i class="y"><b>A</b></i><i class="c"><b>P</b></i><i class="g"><b>N</b></i><i class="g"><b>N</b></i><i class="g"><b>T</b></i><i class="y"><b>V</b></i><i class="g"><b>S</b></i><i class="g"><b>W</b></i><i class="l"><b>Y</b></i><i class="g"><b>T</b></i><i class="p"><b>G</b></i><i class="y"><b>L</b></i><i class="g"><b>T</b></i><i class="g"><b>Q</b></i><i class="h"><b>H</b></i><i class="p"><b>G</b></i><i class="c"><b>K</b></i><i class="y"><b>V</b></i><i class="c"><b>P</b></i><i class="y"><b>L</b></i><i class="g"><b>S</b></i><i class="y"><b>F</b></i><i class="c"><b>P</b></i><i class="c"><b>P</b></i><i class="p"><b>G</b></i><i class="g"><b>Q</b></i><i class="p"><b>G</b></i><i class="y"><b>V</b></i><i class="c"><b>P</b></i><i class="y"><b>L</b></i><i class="g"><b>N</b></i><i class="y"><b>A</b></i><i class="g"><b>N</b></i><i class="g"><b>S</b></i><i class="g"><b>T</b></i><i class="c"><b>P</b></i><i class="y"><b>A</b></i><i class="g"><b>Q</b></i><i class="g"><b>N</b></i><i class="y"><b>A</b></i><i class="p"><b>G</b></i><i class="l"><b>Y</b></i><i class="g"><b>W</b></i><i class="c"><b>R</b></i><i class="c"><b>R</b></i><i class="g"><b>Q</b></i><i class="r"><b>D</b></i><i class="c"><b>R</b></i><i class="c"><b>K</b></i><i class="y"><b>I</b></i><i class="g"><b>N</b></i><i class="g"><b>T</b></i><i class="p"><b>G</b></i><i class="g"><b>N</b></i></div>
<div class="row" style="top:133px"><i class="w"><b>-</b></i><i class="w"><b>-</b></i><i class="w"><b>-</b></i><i class="w"><b>-</b></i><i class="w"><b>-</b></i><i class="w"><b>-</b></i><i class="w"><b>-</b></i><i class="y"><b>M</b></i><i class="y"><b>A</b></i><i class="g"><b>T</b></i><i class="c"><b>P</b></i><i class="y"><b>V</b></i><i class="y"><b>A</b></i><i class="c"><b>P</b></i><i class="c"><b>R</b></i><i class="y"><b>A</b></i><i class="y"><b>V</b></i><i class="g"><b>T</b></i><i class="y"><b>F</b></i><i class="g"><b>S</b></i><i class="r"><b>D</b></i><i class="w"><b>-</b></i><i class="w"><b>-</b></i><i class="w"><b>-</b></i><i class="w"><b>-</b></i><i class="w"><b>-</b></i><i class="g"><b>N</b></i><i class="g"><b>N</b></i><i class="r"><b>D</b></i><i class="g"><b>N</b></i><i class="g"><b>N</b></i><i class="g"><b>T</b></i><i class="g"><b>N</b></i><i class="g"><b>N</b></i><i class="g"><b>Q</b></i><i class="g"><b>Q</b></i><i class="g"><b>S</b></i><i class="c"><b>R</b></i><i class="p"><b>G</b></i><i class="c"><b>R</b></i><i class="p"><b>G</b></i><i class="c"><b>R</b></i><i class="g"><b>T</b></i><i class="c"><b>P</b></i><i class="c"><b>K</b></i><i class="c"><b>P</b></i><i class="c"><b>R</b></i><i class="c"><b>P</b></i><i class="y"><b>A</b></i><i class="c"><b>P</b></i><i class="g"><b>N</b></i><i class="g"><b>N</b></i><i class="g"><b>T</b></i><i class="y"><b>V</b></i><i class="g"><b>S</b></i><i class="g"><b>W</b></i><i class="l"><b>Y</b></i><i class="g"><b>T</b></i><i class="p"><b>G</b></i><i class="y"><b>L</b></i><i class="g"><b>T</b></i><i class="g"><b>Q</b></i><i class="h"><b>H</b></i><i class="p"><b>G</b></i><i class="c"><b>K</b></i><i class="y"><b>F</b></i><i class="c"><b>P</b></i><i class="y"><b>L</b></i><i class="g"><b>S</b></i><i class="y"><b>F</b></i><i class="c"><b>P</b></i><i class="c"><b>P</b></i><i class="p"><b>G</b></i><i class="g"><b>Q</b></i><i class="p"><b>G</b></i><i class="y"><b>V</b></i><i class="c"><b>P</b></i><i class="y"><b>L</b></i><i class="g"><b>N</b></i><i class="y"><b>A</b></i><i class="g"><b>N</b></i><i class="g"><b>S</b></i><i class="g"><b>T</b></i><i class="c"><b>P</b></i><i class="r"><b>E</b></i><i class="g"><b>Q</b></i><i class="g"><b>N</b></i><i class="y"><b>A</b></i><i class="p"><b>G</b></i><i class="l"><b>Y</b></i><i class="g"><b>W</b></i><i class="c"><b>R</b></i><i class="c"><b>R</b></i><i class="g"><b>Q</b></i><i class="r"><b>D</b></i><i class="c"><b>R</b></i><i class="c"><b>K</b></i><i class="y"><b>L</b></i><i class="g"><b>N</b></i><i class="g"><b>T</b></i><i class="p"><b>G</b></i><i class="g"><b>N</b></i></div>
<div class="row" style="top:152px"><i class="y"><b>M</b></i><i class="g"><b>S</b></i><i class="r"><b>D</b></i><i class="g"><b>N</b></i><i class="p"><b>G</b></i><i class="c"><b>P</b></i><i class="g"><b>Q</b></i><i class="g"><b>S</b></i><i class="g"><b>N</b></i><i class="g"><b>Q</b></i><i class="c"><b>R</b></i><i class="g"><b>S</b></i><i class="y"><b>A</b></i><i class="c"><b>P</b></i><i class="c"><b>R</b></i><i class="w"><b>-</b></i><i class="y"><b>I</b></i><i class="g"><b>T</b></i><i class="y"><b>F</b></i><i class="p"><b>G</b></i><i class="p"><b>G</b></i><i class="c"><b>P</b></i><i class="g"><b>T</b></i><i class="w"><b>-</b></i><i class="w"><b>-</b></i><i class="r"><b>D</b></i><i class="g"><b>S</b></i><i class="g"><b>T</b></i><i class="r"><b>D</b></i><i class="g"><b>N</b></i><i class="g"><b>N</b></i><i class="g"><b>Q</b></i><i class="g"><b>N</b></i><i class="p"><b>G</b></i><i class="p"><b>G</b></i><i class="c"><b>R</b></i><i class="g"><b>N</b></i><i class="p"><b>G</b></i><i class="y"><b>A</b></i><i class="c"><b>R</b></i><i class="c"><b>P</b></i><i class="c"><b>K</b></i><i class="g"><b>Q</b></i><i class="c"><b>R</b></i><i class="c"><b>R</b></i><i class="c"><b>P</b></i><i class="g"><b>Q</b></i><i class="p"><b>G</b></i><i class="y"><b>L</b></i><i class="c"><b>P</b></i><i class="g"><b>N</b></i><i class="g"><b>N</b></i><i class="g"><b>T</b></i><i class="y"><b>A</b></i><i class="g"><b>S</b></i><i class="g"><b>W</b></i><i class="y"><b>F</b></i><i class="g"><b>T</b></i><i class="y"><b>A</b></i><i class="y"><b>L</b></i><i class="g"><b>T</b></i><i class="g"><b>Q</b></i><i class="h"><b>H</b></i><i class="p"><b>G</b></i><i class="c"><b>K</b></i><i class="r"><b>E</b></i><i class="r"><b>E</b></i><i class="y"><b>L</b></i><i class="c"><b>R</b></i><i class="y"><b>F</b></i><i class="c"><b>P</b></i><i class="c"><b>R</b></i><i class="p"><b>G</b></i><i class="g"><b>Q</b></i><i class="p"><b>G</b></i><i class="y"><b>V</b></i><i class="c"><b>P</b></i><i class="y"><b>I</b></i><i class="g"><b>N</b></i><i class="g"><b>T</b></i><i class="g"><b>N</b></i><i class="g"><b>S</b></i><i class="p"><b>G</b></i><i class="c"><b>P</b></i><i class="r"><b>D</b></i><i class="r"><b>D</b></i><i class="g"><b>Q</b></i><i class="y"><b>I</b></i><i class="p"><b>G</b></i><i class="l"><b>Y</b></i><i class="l"><b>Y</b></i><i class="c"><b>R</b></i><i class="c"><b>R</b></i><i class="y"><b>A</b></i><i class="g"><b>T</b></i><i class="c"><b>R</b></i><i class="c"><b>R</b></i><i class="y"><b>V</b></i><i class="c"><b>R</b></i><i class="p"><b>G</b></i><i class="p"><b>G</b></i><i class="r"><b>D</b></i></div>
<div class="row" style="top:171px"><i class="y"><b>M</b></i><i class="g"><b>S</b></i><i class="r"><b>D</b></i><i class="g"><b>N</b></i><i class="p"><b>G</b></i><i class="c"><b>P</b></i><i class="g"><b>Q</b></i><i class="w"><b>-</b></i><i class="g"><b>N</b></i><i class="g"><b>Q</b></i><i class="c"><b>R</b></i><i class="g"><b>N</b></i><i class="y"><b>A</b></i><i class="c"><b>P</b></i><i class="c"><b>R</b></i><i class="w"><b>-</b></i><i class="y"><b>I</b></i><i class="g"><b>T</b></i><i class="y"><b>F</b></i><i class="p"><b>G</b></i><i class="p"><b>G</b></i><i class="c"><b>P</b></i><i class="g"><b>S</b></i><i class="w"><b>-</b></i><i class="w"><b>-</b></i><i class="r"><b>D</b></i><i class="g"><b>S</b></i><i class="g"><b>T</b></i><i class="p"><b>G</b></i><i class="g"><b>S</b></i><i class="g"><b>N</b></i><i class="g"><b>Q</b></i><i class="g"><b>N</b></i><i class="p"><b>G</b></i><i class="r"><b>E</b></i><i class="c"><b>R</b></i><i class="g"><b>S</b></i><i class="p"><b>G</b></i><i class="y"><b>A</b></i><i class="c"><b>R</b></i><i class="g"><b>S</b></i><i class="c"><b>K</b></i><i class="g"><b>Q</b></i><i class="c"><b>R</b></i><i class="c"><b>R</b></i><i class="c"><b>P</b></i><i class="g"><b>Q</b></i><i class="p"><b>G</b></i><i class="y"><b>L</b></i><i class="c"><b>P</b></i><i class="g"><b>N</b></i><i class="g"><b>N</b></i><i class="g"><b>T</b></i><i class="y"><b>A</b></i><i class="g"><b>S</b></i><i class="g"><b>W</b></i><i class="y"><b>F</b></i><i class="g"><b>T</b></i><i class="y"><b>A</b></i><i class="y"><b>L</b></i><i class="g"><b>T</b></i><i class="g"><b>Q</b></i><i class="h"><b>H</b></i><i class="p"><b>G</b></i><i class="c"><b>K</b></i><i class="r"><b>E</b></i><i class="r"><b>D</b></i><i class="y"><b>L</b></i><i class="c"><b>K</b></i><i class="y"><b>F</b></i><i class="c"><b>P</b></i><i class="c"><b>R</b></i><i class="p"><b>G</b></i><i class="g"><b>Q</b></i><i class="p"><b>G</b></i><i class="y"><b>V</b></i><i class="c"><b>P</b></i><i class="y"><b>I</b></i><i class="g"><b>N</b></i><i class="g"><b>T</b></i><i class="g"><b>N</b></i><i class="g"><b>S</b></i><i class="g"><b>S</b></i><i class="c"><b>P</b></i><i class="r"><b>D</b></i><i class="r"><b>D</b></i><i class="g"><b>Q</b></i><i class="y"><b>I</b></i><i class="p"><b>G</b></i><i class="l"><b>Y</b></i><i class="l"><b>Y</b></i><i class="c"><b>R</b></i><i class="c"><b>R</b></i><i class="y"><b>A</b></i><i class="g"><b>T</b></i><i class="c"><b>R</b></i><i class="c"><b>R</b></i><i class="y"><b>I</b></i><i class="c"><b>R</b></i><i class="p"><b>G</b></i><i class="p"><b>G</b></i><i class="r"><b>D</b></i></div>
<div class="row" style="top:190px"><i class="y"><b>M</b></i><i class="g"><b>S</b></i><i class="r"><b>D</b></i><i class="g"><b>N</b></i><i class="p"><b>G</b></i><i class="c"><b>P</b></i><i class="g"><b>Q</b></i><i class="w"><b>-</b></i><i class="g"><b>N</b></i><i class="g"><b>Q</b></i><i class="c"><b>R</b></i><i class="g"><b>N</b></i><i class="y"><b>A</b></i><i class="c"><b>P</b></i><i class="c"><b>R</b></i><i class="w"><b>-</b></i><i class="y"><b>I</b></i><i class="g"><b>T</b></i><i class="y"><b>F</b></i><i class="p"><b>G</b></i><i class="p"><b>G</b></i><i class="c"><b>P</b></i><i class="g"><b>S</b></i><i class="w"><b>-</b></i><i class="w"><b>-</b></i><i class="r"><b>D</b></i><i class="g"><b>S</b></i><i class="g"><b>T</b></i><i class="p"><b>G</b></i><i class="g"><b>S</b></i><i class="g"><b>N</b></i><i class="g"><b>Q</b></i><i class="g"><b>N</b></i><i class="p"><b>G</b></i><i class="r"><b>E</b></i><i class="c"><b>R</b></i><i class="g"><b>S</b></i><i class="p"><b>G</b></i><i class="y"><b>A</b></i><i class="c"><b>R</b></i><i class="c"><b>P</b></i><i class="c"><b>K</b></i><i class="g"><b>Q</b></i><i class="c"><b>R</b></i><i class="c"><b>R</b></i><i class="c"><b>P</b></i><i class="g"><b>Q</b></i><i class="p"><b>G</b></i><i class="y"><b>L</b></i><i class="c"><b>P</b></i><i class="g"><b>N</b></i><i class="g"><b>N</b></i><i class="g"><b>T</b></i><i class="y"><b>A</b></i><i class="g"><b>S</b></i><i class="g"><b>W</b></i><i class="y"><b>F</b></i><i class="g"><b>T</b></i><i class="y"><b>A</b></i><i class="y"><b>L</b></i><i class="g"><b>T</b></i><i class="g"><b>Q</b></i><i class="h"><b>H</b></i><i class="p"><b>G</b></i><i class="c"><b>K</b></i><i class="r"><b>E</b></i><i class="r"><b>D</b></i><i class="y"><b>L</b></i><i class="c"><b>K</b></i><i class="y"><b>F</b></i><i class="c"><b>P</b></i><i class="c"><b>R</b></i><i class="p"><b>G</b></i><i class="g"><b>Q</b></i><i class="p"><b>G</b></i><i class="y"><b>V</b></i><i class="c"><b>P</b></i><i class="y"><b>I</b></i><i class="g"><b>N</b></i><i class="g"><b>T</b></i><i class="g"><b>N</b></i><i class="g"><b>S</b></i><i class="g"><b>S</b></i><i class="c"><b>P</b></i><i class="r"><b>D</b></i><i class="r"><b>D</b></i><i class="g"><b>Q</b></i><i class="y"><b>I</b></i><i class="p"><b>G</b></i><i class="l"><b>Y</b></i><i class="l"><b>Y</b></i><i class="c"><b>R</b></i><i class="c"><b>R</b></i><i class="y"><b>A</b></i><i class="g"><b>T</b></i><i class="c"><b>R</b></i><i class="c"><b>R</b></i><i class="y"><b>I</b></i><i class="c"><b>R</b></i><i class="p"><b>G</b></i><i class="p"><b>G</b></i><i class="r"><b>D</b></i></div>
<div class="row" style="top:209px"><i class="y"><b>M</b></i><i class="g"><b>S</b></i><i class="r"><b>D</b></i><i class="g"><b>N</b></i><i class="p"><b>G</b></i><i class="c"><b>P</b></i><i class="g"><b>Q</b></i><i class="w"><b>-</b></i><i class="g"><b>N</b></i><i class="g"><b>Q</b></i><i class="g"><b>S</b></i><i class="g"><b>S</b></i><i class="y"><b>A</b></i><i class="c"><b>P</b></i><i class="c"><b>R</b></i><i class="w"><b>-</b></i><i class="y"><b>I</b></i><i class="g"><b>T</b></i><i class="y"><b>F</b></i><i class="p"><b>G</b></i><i class="p"><b>G</b></i><i class="c"><b>P</b></i><i class="g"><b>S</b></i><i class="w"><b>-</b></i><i class="w"><b>-</b></i><i class="r"><b>D</b></i><i class="g"><b>S</b></i><i class="g"><b>S</b></i><i class="r"><b>D</b></i><i class="g"><b>N</b></i><i class="g"><b>S</b></i><i class="g"><b>Q</b></i><i class="g"><b>N</b></i><i class="p"><b>G</b></i><i class="r"><b>E</b></i><i class="c"><b>R</b></i><i class="g"><b>N</b></i><i class="p"><b>G</b></i><i class="y"><b>A</b></i><i class="c"><b>R</b></i><i class="c"><b>P</b></i><i class="c"><b>K</b></i><i class="g"><b>Q</b></i><i class="c"><b>R</b></i><i class="c"><b>R</b></i><i class="c"><b>P</b></i><i class="g"><b>Q</b></i><i class="p"><b>G</b></i><i class="y"><b>L</b></i><i class="c"><b>P</b></i><i class="g"><b>N</b></i><i class="g"><b>N</b></i><i class="g"><b>T</b></i><i class="y"><b>A</b></i><i class="g"><b>S</b></i><i class="g"><b>W</b></i><i class="y"><b>F</b></i><i class="g"><b>T</b></i><i class="y"><b>A</b></i><i class="y"><b>L</b></i><i class="g"><b>T</b></i><i class="g"><b>Q</b></i><i class="h"><b>H</b></i><i class="p"><b>G</b></i><i class="c"><b>K</b></i><i class="r"><b>E</b></i><i class="g"><b>N</b></i><i class="y"><b>L</b></i><i class="g"><b>T</b></i><i class="y"><b>F</b></i><i class="c"><b>P</b></i><i class="c"><b>R</b></i><i class="p"><b>G</b></i><i class="g"><b>Q</b></i><i class="p"><b>G</b></i><i class="y"><b>V</b></i><i class="c"><b>P</b></i><i class="y"><b>I</b></i><i class="g"><b>N</b></i><i class="g"><b>T</b></i><i class="g"><b>N</b></i><i class="g"><b>S</b></i><i class="g"><b>S</b></i><i class="c"><b>K</b></i><i class="r"><b>D</b></i><i class="r"><b>D</b></i><i class="g"><b>Q</b></i><i class="y"><b>I</b></i><i class="p"><b>G</b></i><i class="l"><b>Y</b></i><i class="l"><b>Y</b></i><i class="c"><b>R</b></i><i class="c"><b>R</b></i><i class="y"><b>A</b></i><i class="g"><b>T</b></i><i class="c"><b>R</b></i><i class="c"><b>R</b></i><i class="y"><b>I</b></i><i class="c"><b>R</b></i><i class="p"><b>G</b></i><i class="p"><b>G</b></i><i class="r"><b>D</b></i></div>
<div class="row" style="top:228px"><i class="y"><b>M</b></i><i class="g"><b>T</b></i><i class="r"><b>D</b></i><i class="g"><b>N</b></i><i class="p"><b>G</b></i><i class="w"><b>-</b></i><i class="g"><b>Q</b></i><i class="g"><b>Q</b></i><i class="p"><b>G</b></i><i class="c"><b>P</b></i><i class="c"><b>R</b></i><i class="g"><b>N</b></i><i class="y"><b>A</b></i><i class="c"><b>P</b></i><i class="c"><b>R</b></i><i class="w"><b>-</b></i><i class="y"><b>I</b></i><i class="g"><b>T</b></i><i class="y"><b>F</b></i><i class="p"><b>G</b></i><i class="y"><b>V</b></i><i class="w"><b>-</b></i><i class="g"><b>S</b></i><i class="w"><b>-</b></i><i class="w"><b>-</b></i><i class="r"><b>D</b></i><i class="g"><b>N</b></i><i class="y"><b>F</b></i><i class="r"><b>D</b></i><i class="g"><b>N</b></i><i class="g"><b>N</b></i><i class="g"><b>Q</b></i><i class="g"><b>N</b></i><i class="p"><b>G</b></i><i class="r"><b>D</b></i><i class="c"><b>R</b></i><i class="g"><b>T</b></i><i class="p"><b>G</b></i><i class="y"><b>A</b></i><i class="c"><b>R</b></i><i class="c"><b>P</b></i><i class="c"><b>K</b></i><i class="h"><b>H</b></i><i class="c"><b>R</b></i><i class="c"><b>R</b></i><i class="c"><b>P</b></i><i class="g"><b>Q</b></i><i class="p"><b>G</b></i><i class="c"><b>P</b></i><i class="c"><b>P</b></i><i class="g"><b>N</b></i><i class="g"><b>N</b></i><i class="g"><b>T</b></i><i class="y"><b>A</b></i><i class="g"><b>S</b></i><i class="g"><b>W</b></i><i class="y"><b>F</b></i><i class="g"><b>T</b></i><i class="y"><b>A</b></i><i class="y"><b>L</b></i><i class="g"><b>T</b></i><i class="g"><b>Q</b></i><i class="h"><b>H</b></i><i class="p"><b>G</b></i><i class="c"><b>K</b></i><i class="r"><b>E</b></i><i class="g"><b>T</b></i><i class="y"><b>L</b></i><i class="g"><b>T</b></i><i class="y"><b>F</b></i><i class="c"><b>P</b></i><i class="c"><b>R</b></i><i class="p"><b>G</b></i><i class="g"><b>Q</b></i><i class="p"><b>G</b></i><i class="y"><b>V</b></i><i class="c"><b>P</b></i><i class="y"><b>I</b></i><i class="g"><b>N</b></i><i class="g"><b>T</b></i><i class="g"><b>N</b></i><i class="g"><b>S</b></i><i class="p"><b>G</b></i><i class="c"><b>K</b></i><i class="r"><b>D</b></i><i class="r"><b>D</b></i><i class="g"><b>Q</b></i><i class="y"><b>I</b></i><i class="p"><b>G</b></i><i class="l"><b>Y</b></i><i class="l"><b>Y</b></i><i class="c"><b>R</b></i><i class="c"><b>R</b></i><i class="y"><b>A</b></i><i class="g"><b>S</b></i><i class="c"><b>R</b></i><i class="c"><b>R</b></i><i class="y"><b>V</b></i><i class="c"><b>R</b></i><i class="p"><b>G</b></i><i class="p"><b>G</b></i><i class="r"><b>D</b></i></div>
<div class="row" style="top:247px"><i class="y"><b>M</b></i><i class="g"><b>S</b></i><i class="r"><b>D</b></i><i class="g"><b>N</b></i><i class="p"><b>G</b></i><i class="g"><b>T</b></i><i class="g"><b>Q</b></i><i class="w"><b>-</b></i><i class="g"><b>N</b></i><i class="g"><b>Q</b></i><i class="c"><b>R</b></i><i class="g"><b>S</b></i><i class="y"><b>A</b></i><i class="g"><b>S</b></i><i class="c"><b>R</b></i><i class="w"><b>-</b></i><i class="y"><b>I</b></i><i class="g"><b>T</b></i><i class="y"><b>F</b></i><i class="p"><b>G</b></i><i class="p"><b>G</b></i><i class="c"><b>P</b></i><i class="g"><b>S</b></i><i class="w"><b>-</b></i><i class="w"><b>-</b></i><i class="r"><b>D</b></i><i class="g"><b>S</b></i><i class="g"><b>T</b></i><i class="r"><b>D</b></i><i class="g"><b>N</b></i><i class="g"><b>N</b></i><i class="g"><b>Q</b></i><i class="r"><b>D</b></i><i class="p"><b>G</b></i><i class="p"><b>G</b></i><i class="c"><b>R</b></i><i class="g"><b>S</b></i><i class="p"><b>G</b></i><i class="y"><b>A</b></i><i class="c"><b>R</b></i><i class="c"><b>P</b></i><i class="c"><b>K</b></i><i class="g"><b>Q</b></i><i class="c"><b>R</b></i><i class="c"><b>R</b></i><i class="c"><b>P</b></i><i class="g"><b>Q</b></i><i class="p"><b>G</b></i><i class="y"><b>L</b></i><i class="c"><b>P</b></i><i class="g"><b>N</b></i><i class="g"><b>N</b></i><i class="g"><b>T</b></i><i class="y"><b>A</b></i><i class="g"><b>S</b></i><i class="g"><b>W</b></i><i class="y"><b>F</b></i><i class="g"><b>T</b></i><i class="y"><b>A</b></i><i class="y"><b>L</b></i><i class="g"><b>T</b></i><i class="g"><b>Q</b></i><i class="h"><b>H</b></i><i class="p"><b>G</b></i><i class="c"><b>K</b></i><i class="r"><b>E</b></i><i class="p"><b>G</b></i><i class="y"><b>L</b></i><i class="c"><b>K</b></i><i class="y"><b>F</b></i><i class="c"><b>P</b></i><i class="g"><b>Q</b></i><i class="p"><b>G</b></i><i class="g"><b>Q</b></i><i class="p"><b>G</b></i><i class="y"><b>V</b></i><i class="c"><b>P</b></i><i class="y"><b>I</b></i><i class="g"><b>N</b></i><i class="g"><b>T</b></i><i class="g"><b>N</b></i><i class="g"><b>S</b></i><i class="p"><b>G</b></i><i class="c"><b>R</b></i><i class="r"><b>D</b></i><i class="r"><b>D</b></i><i class="g"><b>Q</b></i><i class="y"><b>I</b></i><i class="p"><b>G</b></i><i class="l"><b>Y</b></i><i class="l"><b>Y</b></i><i class="c"><b>R</b></i><i class="c"><b>R</b></i><i class="y"><b>A</b></i><i class="g"><b>T</b></i><i class="c"><b>R</b></i><i class="c"><b>R</b></i><i class="y"><b>V</b></i><i class="c"><b>R</b></i><i class="p"><b>G</b></i><i class="p"><b>G</b></i><i class="r"><b>D</b></i></div>
<div class="row" style="top:266px"><i class="y"><b>M</b></i><i class="g"><b>S</b></i><i class="r"><b>D</b></i><i class="g"><b>N</b></i><i class="p"><b>G</b></i><i class="c"><b>P</b></i><i class="g"><b>Q</b></i><i class="w"><b>-</b></i><i class="g"><b>N</b></i><i class="g"><b>Q</b></i><i class="k"><b>C</b></i><i class="g"><b>S</b></i><i class="y"><b>A</b></i><i class="c"><b>P</b></i><i class="c"><b>R</b></i><i class="w"><b>-</b></i><i class="y"><b>I</b></i><i class="g"><b>T</b></i><i class="y"><b>F</b></i><i class="p"><b>G</b></i><i class="p"><b>G</b></i><i class="c"><b>P</b></i><i class="g"><b>S</b></i><i class="w"><b>-</b></i><i class="w"><b>-</b></i><i class="r"><b>D</b></i><i class="g"><b>S</b></i><i class="g"><b>T</b></i><i class="r"><b>D</b></i><i class="g"><b>N</b></i><i class="g"><b>N</b></i><i class="g"><b>Q</b></i><i class="r"><b>D</b></i><i class="p"><b>G</b></i><i class="p"><b>G</b></i><i class="c"><b>R</b></i><i class="g"><b>S</b></i><i class="p"><b>G</b></i><i class="y"><b>A</b></i><i class="c"><b>R</b></i><i class="c"><b>P</b></i><i class="c"><b>K</b></i><i class="g"><b>Q</b></i><i class="c"><b>R</b></i><i class="c"><b>R</b></i><i class="c"><b>P</b></i><i class="g"><b>Q</b></i><i class="p"><b>G</b></i><i class="y"><b>L</b></i><i class="c"><b>P</b></i><i class="g"><b>N</b></i><i class="g"><b>N</b></i><i class="g"><b>T</b></i><i class="y"><b>A</b></i><i class="g"><b>S</b></i><i class="g"><b>W</b></i><i class="y"><b>F</b></i><i class="g"><b>T</b></i><i class="y"><b>A</b></i><i class="y"><b>L</b></i><i class="g"><b>T</b></i><i class="g"><b>Q</b></i><i class="h"><b>H</b></i><i class="p"><b>G</b></i><i class="c"><b>K</b></i><i class="r"><b>E</b></i><i class="p"><b>G</b></i><i class="y"><b>L</b></i><i class="c"><b>K</b></i><i class="y"><b>F</b></i><i class="c"><b>P</b></i><i class="g"><b>Q</b></i><i class="p"><b>G</b></i><i class="g"><b>Q</b></i><i class="p"><b>G</b></i><i class="y"><b>V</b></i><i class="c"><b>P</b></i><i class="y"><b>I</b></i><i class="g"><b>N</b></i><i class="g"><b>T</b></i><i class="g"><b>N</b></i><i class="g"><b>S</b></i><i class="p"><b>G</b></i><i class="c"><b>R</b></i><i class="r"><b>D</b></i><i class="r"><b>D</b></i><i class="g"><b>Q</b></i><i class="y"><b>I</b></i><i class="p"><b>G</b></i><i class="l"><b>Y</b></i><i class="l"><b>Y</b></i><i class="c"><b>R</b></i><i class="c"><b>R</b></i><i class="y"><b>A</b></i><i class="g"><b>T</b></i><i class="c"><b>R</b></i><i class="c"><b>R</b></i><i class="y"><b>V</b></i><i class="c"><b>R</b></i><i class="p"><b>G</b></i><i class="p"><b>G</b></i><i class="r"><b>D</b></i></div>
<div class="row" style="top:285px"><i class="y"><b>M</b></i><i class="g"><b>S</b></i><i class="r"><b>D</b></i><i class="g"><b>N</b></i><i class="p"><b>G</b></i><i class="c"><b>P</b></i><i class="g"><b>Q</b></i><i class="w"><b>-</b></i><i class="g"><b>N</b></i><i class="g"><b>Q</b></i><i class="c"><b>R</b></i><i class="g"><b>S</b></i><i class="y"><b>A</b></i><i class="c"><b>P</b></i><i class="c"><b>R</b></i><i class="w"><b>-</b></i><i class="y"><b>I</b></i><i class="g"><b>T</b></i><i class="y"><b>F</b></i><i class="p"><b>G</b></i><i class="p"><b>G</b></i><i class="c"><b>P</b></i><i class="g"><b>S</b></i><i class="w"><b>-</b></i><i class="w"><b>-</b></i><i class="r"><b>D</b></i><i class="g"><b>S</b></i><i class="g"><b>T</b></i><i class="r"><b>D</b></i><i class="g"><b>N</b></i><i class="g"><b>N</b></i><i class="g"><b>Q</b></i><i class="r"><b>D</b></i><i class="p"><b>G</b></i><i class="p"><b>G</b></i><i class="c"><b>R</b></i><i class="g"><b>S</b></i><i class="p"><b>G</b></i><i class="y"><b>V</b></i><i class="c"><b>R</b></i><i class="c"><b>P</b></i><i class="c"><b>K</b></i><i class="g"><b>Q</b></i><i class="c"><b>R</b></i><i class="c"><b>R</b></i><i class="c"><b>P</b></i><i class="g"><b>Q</b></i><i class="p"><b>G</b></i><i class="y"><b>L</b></i><i class="c"><b>P</b></i><i class="g"><b>N</b></i><i class="g"><b>N</b></i><i class="g"><b>T</b></i><i class="y"><b>A</b></i><i class="g"><b>S</b></i><i class="g"><b>W</b></i><i class="y"><b>F</b></i><i class="g"><b>T</b></i><i class="y"><b>A</b></i><i class="y"><b>L</b></i><i class="g"><b>T</b></i><i class="g"><b>Q</b></i><i class="h"><b>H</b></i><i class="p"><b>G</b></i><i class="c"><b>K</b></i><i class="r"><b>E</b></i><i class="p"><b>G</b></i><i class="y"><b>L</b></i><i class="c"><b>K</b></i><i class="y"><b>F</b></i><i class="c"><b>P</b></i><i class="g"><b>Q</b></i><i class="p"><b>G</b></i><i class="g"><b>Q</b></i><i class="p"><b>G</b></i><i class="y"><b>V</b></i><i class="c"><b>P</b></i><i class="y"><b>I</b></i><i class="g"><b>N</b></i><i class="g"><b>T</b></i><i class="g"><b>N</b></i><i class="g"><b>S</b></i><i class="p"><b>G</b></i><i class="c"><b>R</b></i><i class="r"><b>D</b></i><i class="r"><b>D</b></i><i class="g"><b>Q</b></i><i class="y"><b>I</b></i><i class="p"><b>G</b></i><i class="l"><b>Y</b></i><i class="l"><b>Y</b></i><i class="c"><b>R</b></i><i class="c"><b>R</b></i><i class="y"><b>A</b></i><i class="g"><b>T</b></i><i class="c"><b>R</b></i><i class="c"><b>R</b></i><i class="y"><b>V</b></i><i class="c"><b>R</b></i><i class="p"><b>G</b></i><i class="p"><b>G</b></i><i class="r"><b>D</b></i></div>
<div class="row" style="top:304px"><i class="y"><b>M</b></i><i class="g"><b>S</b></i><i class="r"><b>D</b></i><i class="g"><b>N</b></i><i class="p"><b>G</b></i><i class="c"><b>P</b></i><i class="g"><b>Q</b></i><i class="w"><b>-</b></i><i class="g"><b>N</b></i><i class="g"><b>Q</b></i><i class="c"><b>R</b></i><i class="g"><b>S</b></i><i class="y"><b>A</b></i><i class="c"><b>P</b></i><i class="c"><b>R</b></i><i class="w"><b>-</b></i><i class="y"><b>I</b></i><i class="g"><b>T</b></i><i class="y"><b>F</b></i><i class="p"><b>G</b></i><i class="p"><b>G</b></i><i class="c"><b>P</b></i><i class="g"><b>S</b></i><i class="w"><b>-</b></i><i class="w"><b>-</b></i><i class="r"><b>D</b></i><i class="g"><b>S</b></i><i class="g"><b>T</b></i><i class="r"><b>D</b></i><i class="g"><b>N</b></i><i class="g"><b>N</b></i><i class="g"><b>Q</b></i><i class="r"><b>D</b></i><i class="p"><b>G</b></i><i class="p"><b>G</b></i><i class="c"><b>R</b></i><i class="g"><b>S</b></i><i class="p"><b>G</b></i><i class="y"><b>A</b></i><i class="c"><b>R</b></i><i class="c"><b>P</b></i><i class="c"><b>K</b></i><i class="g"><b>Q</b></i><i class="c"><b>R</b></i><i class="c"><b>R</b></i><i class="c"><b>P</b></i><i class="g"><b>Q</b></i><i class="p"><b>G</b></i><i class="y"><b>L</b></i><i class="c"><b>P</b></i><i class="g"><b>N</b></i><i class="g"><b>N</b></i><i class="g"><b>T</b></i><i class="y"><b>A</b></i><i class="g"><b>S</b></i><i class="g"><b>W</b></i><i class="y"><b>F</b></i><i class="g"><b>T</b></i><i class="y"><b>A</b></i><i class="y"><b>L</b></i><i class="g"><b>T</b></i><i class="g"><b>Q</b></i><i class="h"><b>H</b></i><i class="p"><b>G</b></i><i class="c"><b>K</b></i><i class="r"><b>E</b></i><i class="p"><b>G</b></i><i class="y"><b>L</b></i><i class="c"><b>K</b></i><i class="y"><b>F</b></i><i class="c"><b>P</b></i><i class="g"><b>Q</b></i><i class="p"><b>G</b></i><i class="g"><b>Q</b></i><i class="p"><b>G</b></i><i class="y"><b>V</b></i><i class="c"><b>P</b></i><i class="y"><b>I</b></i><i class="g"><b>N</b></i><i class="g"><b>T</b></i><i class="g"><b>N</b></i><i class="g"><b>S</b></i><i class="p"><b>G</b></i><i class="c"><b>R</b></i><i class="r"><b>D</b></i><i class="r"><b>D</b></i><i class="g"><b>Q</b></i><i class="y"><b>I</b></i><i class="p"><b>G</b></i><i class="l"><b>Y</b></i><i class="l"><b>Y</b></i><i class="c"><b>R</b></i><i class="c"><b>R</b></i><i class="y"><b>A</b></i><i class="g"><b>T</b></i><i class="c"><b>R</b></i><i class="c"><b>R</b></i><i class="y"><b>V</b></i><i class="c"><b>R</b></i><i class="p"><b>G</b></i><i class="p"><b>G</b></i><i class="r"><b>D</b></i></div>
<div class="row" style="top:323px"><i class="y"><b>M</b></i><i class="g"><b>S</b></i><i class="r"><b>D</b></i><i class="g"><b>N</b></i><i class="p"><b>G</b></i><i class="c"><b>P</b></i><i class="g"><b>Q</b></i><i class="w"><b>-</b></i><i class="g"><b>S</b></i><i class="g"><b>Q</b></i><i class="c"><b>R</b></i><i class="g"><b>S</b></i><i class="y"><b>A</b></i><i class="c"><b>P</b></i><i class="c"><b>R</b></i><i class="w"><b>-</b></i><i class="y"><b>I</b></i><i class="g"><b>T</b></i><i class="y"><b>F</b></i><i class="p"><b>G</b></i><i class="p"><b>G</b></i><i class="c"><b>P</b></i><i class="y"><b>A</b></i><i class="w"><b>-</b></i><i class="w"><b>-</b></i><i class="r"><b>D</b></i><i class="g"><b>S</b></i><i class="g"><b>N</b></i><i class="r"><b>D</b></i><i class="g"><b>N</b></i><i class="g"><b>N</b></i><i class="g"><b>Q</b></i><i class="r"><b>D</b></i><i class="p"><b>G</b></i><i class="p"><b>G</b></i><i class="c"><b>R</b></i><i class="g"><b>S</b></i><i class="p"><b>G</b></i><i class="y"><b>A</b></i><i class="c"><b>R</b></i><i class="c"><b>P</b></i><i class="c"><b>K</b></i><i class="g"><b>Q</b></i><i class="c"><b>R</b></i><i class="c"><b>R</b></i><i class="c"><b>P</b></i><i class="g"><b>Q</b></i><i class="y"><b>A</b></i><i class="y"><b>L</b></i><i class="c"><b>P</b></i><i class="g"><b>N</b></i><i class="g"><b>N</b></i><i class="g"><b>T</b></i><i class="y"><b>A</b></i><i class="g"><b>S</b></i><i class="g"><b>W</b></i><i class="y"><b>F</b></i><i class="g"><b>T</b></i><i class="y"><b>A</b></i><i class="y"><b>L</b></i><i class="g"><b>T</b></i><i class="g"><b>Q</b></i><i class="h"><b>H</b></i><i class="p"><b>G</b></i><i class="c"><b>K</b></i><i class="r"><b>E</b></i><i class="r"><b>E</b></i><i class="y"><b>L</b></i><i class="c"><b>R</b></i><i class="y"><b>F</b></i><i class="c"><b>P</b></i><i class="c"><b>R</b></i><i class="p"><b>G</b></i><i class="g"><b>Q</b></i><i class="p"><b>G</b></i><i class="y"><b>V</b></i><i class="c"><b>P</b></i><i class="y"><b>I</b></i><i class="g"><b>N</b></i><i class="g"><b>T</b></i><i class="g"><b>N</b></i><i class="g"><b>S</b></i><i class="p"><b>G</b></i><i class="c"><b>K</b></i><i class="r"><b>D</b></i><i class="r"><b>D</b></i><i class="g"><b>Q</b></i><i class="y"><b>I</b></i><i class="p"><b>G</b></i><i class="l"><b>Y</b></i><i class="l"><b>Y</b></i><i class="c"><b>R</b></i><i class="c"><b>R</b></i><i class="y"><b>A</b></i><i class="g"><b>T</b></i><i class="c"><b>R</b></i><i class="c"><b>R</b></i><i class="y"><b>V</b></i><i class="c"><b>R</b></i><i class="p"><b>G</b></i><i class="p"><b>G</b></i><i class="r"><b>D</b></i></div>
<div class="row" style="top:342px"><i class="y"><b>M</b></i><i class="g"><b>S</b></i><i class="r"><b>D</b></i><i class="g"><b>N</b></i><i class="p"><b>G</b></i><i class="c"><b>P</b></i><i class="g"><b>Q</b></i><i class="w"><b>-</b></i><i class="g"><b>S</b></i><i class="g"><b>Q</b></i><i class="c"><b>R</b></i><i class="g"><b>S</b></i><i class="y"><b>A</b></i><i class="c"><b>P</b></i><i class="c"><b>R</b></i><i class="w"><b>-</b></i><i class="y"><b>I</b></i><i class="g"><b>T</b></i><i class="y"><b>F</b></i><i class="p"><b>G</b></i><i class="p"><b>G</b></i><i class="c"><b>P</b></i><i class="y"><b>A</b></i><i class="w"><b>-</b></i><i class="w"><b>-</b></i><i class="r"><b>D</b></i><i class="g"><b>S</b></i><i class="g"><b>N</b></i><i class="r"><b>D</b></i><i class="g"><b>N</b></i><i class="g"><b>N</b></i><i class="g"><b>Q</b></i><i class="r"><b>D</b></i><i class="p"><b>G</b></i><i class="p"><b>G</b></i><i class="c"><b>R</b></i><i class="g"><b>S</b></i><i class="p"><b>G</b></i><i class="y"><b>A</b></i><i class="c"><b>R</b></i><i class="c"><b>P</b></i><i class="c"><b>K</b></i><i class="g"><b>Q</b></i><i class="c"><b>R</b></i><i class="c"><b>R</b></i><i class="c"><b>P</b></i><i class="g"><b>Q</b></i><i class="p"><b>G</b></i><i class="y"><b>L</b></i><i class="c"><b>P</b></i><i class="g"><b>N</b></i><i class="g"><b>N</b></i><i class="g"><b>T</b></i><i class="y"><b>A</b></i><i class="g"><b>S</b></i><i class="g"><b>W</b></i><i class="y"><b>F</b></i><i class="g"><b>T</b></i><i class="y"><b>A</b></i><i class="y"><b>L</b></i><i class="g"><b>T</b></i><i class="g"><b>Q</b></i><i class="h"><b>H</b></i><i class="p"><b>G</b></i><i class="c"><b>K</b></i><i class="r"><b>E</b></i><i class="r"><b>E</b></i><i class="y"><b>L</b></i><i class="c"><b>R</b></i><i class="y"><b>F</b></i><i class="c"><b>P</b></i><i class="c"><b>R</b></i><i class="p"><b>G</b></i><i class="g"><b>Q</b></i><i class="p"><b>G</b></i><i class="y"><b>V</b></i><i class="c"><b>P</b></i><i class="y"><b>I</b></i><i class="g"><b>N</b></i><i class="g"><b>T</b></i><i class="g"><b>N</b></i><i class="g"><b>S</b></i><i class="p"><b>G</b></i><i class="c"><b>K</b></i><i class="r"><b>D</b></i><i class="r"><b>D</b></i><i class="g"><b>Q</b></i><i class="y"><b>I</b></i><i class="p"><b>G</b></i><i class="l"><b>Y</b></i><i class="l"><b>Y</b></i><i class="c"><b>R</b></i><i class="c"><b>R</b></i><i class="y"><b>A</b></i><i class="g"><b>T</b></i><i class="c"><b>R</b></i><i class="c"><b>R</b></i><i class="y"><b>V</b></i><i class="c"><b>R</b></i><i class="p"><b>G</b></i><i class="p"><b>G</b></i><i class="r"><b>D</b></i></div>
<div class="row" style="top:361px"><i class="y"><b>M</b></i><i class="g"><b>S</b></i><i class="r"><b>D</b></i><i class="g"><b>N</b></i><i class="p"><b>G</b></i><i class="c"><b>P</b></i><i class="g"><b>Q</b></i><i class="w"><b>-</b></i><i class="g"><b>S</b></i><i class="g"><b>Q</b></i><i class="c"><b>R</b></i><i class="g"><b>S</b></i><i class="y"><b>A</b></i><i class="c"><b>P</b></i><i class="c"><b>R</b></i><i class="w"><b>-</b></i><i class="y"><b>I</b></i><i class="g"><b>T</b></i><i class="y"><b>F</b></i><i class="p"><b>G</b></i><i class="p"><b>G</b></i><i class="c"><b>P</b></i><i class="y"><b>A</b></i><i class="w"><b>-</b></i><i class="w"><b>-</b></i><i class="r"><b>D</b></i><i class="g"><b>S</b></i><i class="g"><b>N</b></i><i class="r"><b>D</b></i><i class="g"><b>N</b></i><i class="g"><b>N</b></i><i class="g"><b>Q</b></i><i class="r"><b>D</b></i><i class="p"><b>G</b></i><i class="p"><b>G</b></i><i class="c"><b>R</b></i><i class="g"><b>S</b></i><i class="p"><b>G</b></i><i class="y"><b>A</b></i><i class="c"><b>R</b></i><i class="c"><b>P</b></i><i class="c"><b>K</b></i><i class="g"><b>Q</b></i><i class="c"><b>R</b></i><i class="c"><b>R</b></i><i class="c"><b>P</b></i><i class="g"><b>Q</b></i><i class="p"><b>G</b></i><i class="y"><b>L</b></i><i class="c"><b>P</b></i><i class="g"><b>N</b></i><i class="g"><b>N</b></i><i class="g"><b>T</b></i><i class="y"><b>A</b></i><i class="g"><b>S</b></i><i class="g"><b>W</b></i><i class="y"><b>F</b></i><i class="g"><b>T</b></i><i class="y"><b>A</b></i><i class="y"><b>L</b></i><i class="g"><b>T</b></i><i class="g"><b>Q</b></i><i class="h"><b>H</b></i><i class="p"><b>G</b></i><i class="c"><b>K</b></i><i class="r"><b>E</b></i><i class="r"><b>E</b></i><i class="y"><b>L</b></i><i class="c"><b>R</b></i><i class="y"><b>F</b></i><i class="c"><b>P</b></i><i class="c"><b>R</b></i><i class="p"><b>G</b></i><i class="g"><b>Q</b></i><i class="p"><b>G</b></i><i class="y"><b>V</b></i><i class="c"><b>P</b></i><i class="y"><b>I</b></i><i class="g"><b>N</b></i><i class="g"><b>T</b></i><i class="g"><b>N</b></i><i class="g"><b>S</b></i><i class="p"><b>G</b></i><i class="c"><b>K</b></i><i class="r"><b>D</b></i><i class="r"><b>D</b></i><i class="g"><b>Q</b></i><i class="y"><b>I</b></i><i class="p"><b>G</b></i><i class="l"><b>Y</b></i><i class="l"><b>Y</b></i><i class="c"><b>R</b></i><i class="c"><b>R</b></i><i class="y"><b>A</b></i><i class="g"><b>T</b></i><i class="c"><b>R</b></i><i class="c"><b>R</b></i><i class="y"><b>V</b></i><i class="c"><b>R</b></i><i class="p"><b>G</b></i><i class="p"><b>G</b></i><i class="r"><b>D</b></i></div>
<div class="row" style="top:380px"><i class="y"><b>M</b></i><i class="g"><b>S</b></i><i class="r"><b>D</b></i><i class="g"><b>N</b></i><i class="p"><b>G</b></i><i class="c"><b>P</b></i><i class="g"><b>Q</b></i><i class="w"><b>-</b></i><i class="g"><b>S</b></i><i class="g"><b>Q</b></i><i class="c"><b>R</b></i><i class="g"><b>S</b></i><i class="y"><b>A</b></i><i class="c"><b>P</b></i><i class="c"><b>R</b></i><i class="w"><b>-</b></i><i class="y"><b>I</b></i><i class="g"><b>T</b></i><i class="y"><b>F</b></i><i class="p"><b>G</b></i><i class="p"><b>G</b></i><i class="c"><b>P</b></i><i class="y"><b>A</b></i><i class="w"><b>-</b></i><i class="w"><b>-</b></i><i class="r"><b>D</b></i><i class="g"><b>S</b></i><i class="g"><b>N</b></i><i class="r"><b>D</b></i><i class="g"><b>N</b></i><i class="g"><b>N</b></i><i class="g"><b>Q</b></i><i class="r"><b>D</b></i><i class="p"><b>G</b></i><i class="p"><b>G</b></i><i class="c"><b>R</b></i><i class="g"><b>S</b></i><i class="p"><b>G</b></i><i class="y"><b>A</b></i><i class="c"><b>R</b></i><i class="c"><b>P</b></i><i class="c"><b>K</b></i><i class="g"><b>Q</b></i><i class="c"><b>R</b></i><i class="c"><b>R</b></i><i class="c"><b>P</b></i><i class="g"><b>Q</b></i><i class="p"><b>G</b></i><i class="y"><b>L</b></i><i class="c"><b>P</b></i><i class="g"><b>N</b></i><i class="g"><b>N</b></i><i class="g"><b>T</b></i><i class="y"><b>A</b></i><i class="g"><b>S</b></i><i class="g"><b>W</b></i><i class="y"><b>F</b></i><i class="g"><b>T</b></i><i class="y"><b>A</b></i><i class="y"><b>L</b></i><i class="g"><b>T</b></i><i class="g"><b>Q</b></i><i class="h"><b>H</b></i><i class="p"><b>G</b></i><i class="c"><b>K</b></i><i class="r"><b>E</b></i><i class="r"><b>E</b></i><i class="y"><b>L</b></i><i class="c"><b>R</b></i><i class="y"><b>F</b></i><i class="c"><b>P</b></i><i class="c"><b>R</b></i><i class="p"><b>G</b></i><i class="g"><b>Q</b></i><i class="p"><b>G</b></i><i class="y"><b>V</b></i><i class="c"><b>P</b></i><i class="y"><b>I</b></i><i class="g"><b>N</b></i><i class="g"><b>T</b></i><i class="g"><b>N</b></i><i class="g"><b>S</b></i><i class="p"><b>G</b></i><i class="c"><b>K</b></i><i class="r"><b>D</b></i><i class="r"><b>D</b></i><i class="g"><b>Q</b></i><i class="y"><b>I</b></i><i class="p"><b>G</b></i><i class="l"><b>Y</b></i><i class="l"><b>Y</b></i><i class="c"><b>R</b></i><i class="c"><b>R</b></i><i class="y"><b>A</b></i><i class="g"><b>T</b></i><i class="c"><b>R</b></i><i class="c"><b>R</b></i><i class="y"><b>V</b></i><i class="c"><b>R</b></i><i class="p"><b>G</b></i><i class="p"><b>G</b></i><i class="r"><b>D</b></i></div>
<div class="row" style="top:399px"><i class="y"><b>M</b></i><i class="g"><b>S</b></i><i class="r"><b>D</b></i><i class="g"><b>N</b></i><i class="p"><b>G</b></i><i class="c"><b>P</b></i><i class="g"><b>Q</b></i><i class="w"><b>-</b></i><i class="g"><b>S</b></i><i class="g"><b>Q</b></i><i class="c"><b>R</b></i><i class="g"><b>S</b></i><i class="y"><b>A</b></i><i class="c"><b>P</b></i><i class="c"><b>R</b></i><i class="w"><b>-</b></i><i class="y"><b>I</b></i><i class="g"><b>T</b></i><i class="y"><b>F</b></i><i class="p"><b>G</b></i><i class="p"><b>G</b></i><i class="c"><b>P</b></i><i class="y"><b>A</b></i><i class="w"><b>-</b></i><i class="w"><b>-</b></i><i class="r"><b>D</b></i><i class="g"><b>S</b></i><i class="g"><b>N</b></i><i class="r"><b>D</b></i><i class="g"><b>N</b></i><i class="g"><b>N</b></i><i class="g"><b>Q</b></i><i class="r"><b>D</b></i><i class="p"><b>G</b></i><i class="p"><b>G</b></i><i class="c"><b>R</b></i><i class="g"><b>S</b></i><i class="p"><b>G</b></i><i class="y"><b>A</b></i><i class="c"><b>R</b></i><i class="c"><b>P</b></i><i class="c"><b>K</b></i><i class="g"><b>Q</b></i><i class="c"><b>R</b></i><i class="c"><b>R</b></i><i class="c"><b>P</b></i><i class="g"><b>Q</b></i><i class="p"><b>G</b></i><i class="y"><b>L</b></i><i class="c"><b>P</b></i><i class="g"><b>N</b></i><i class="g"><b>N</b></i><i class="g"><b>T</b></i><i class="y"><b>A</b></i><i class="g"><b>S</b></i><i class="g"><b>W</b></i><i class="y"><b>F</b></i><i class="g"><b>T</b></i><i class="y"><b>A</b></i><i class="y"><b>L</b></i><i class="g"><b>T</b></i><i class="g"><b>Q</b></i><i class="h"><b>H</b></i><i class="p"><b>G</b></i><i class="c"><b>K</b></i><i class="r"><b>E</b></i><i class="r"><b>E</b></i><i class="y"><b>L</b></i><i class="c"><b>R</b></i><i class="y"><b>F</b></i><i class="c"><b>P</b></i><i class="c"><b>R</b></i><i class="p"><b>G</b></i><i class="g"><b>Q</b></i><i class="p"><b>G</b></i><i class="y"><b>V</b></i><i class="c"><b>P</b></i><i class="y"><b>I</b></i><i class="g"><b>N</b></i><i class="g"><b>T</b></i><i class="g"><b>N</b></i><i class="g"><b>S</b></i><i class="p"><b>G</b></i><i class="c"><b>K</b></i><i class="r"><b>D</b></i><i class="r"><b>D</b></i><i class="g"><b>Q</b></i><i class="y"><b>I</b></i><i class="p"><b>G</b></i><i class="l"><b>Y</b></i><i class="l"><b>Y</b></i><i class="c"><b>R</b></i><i class="c"><b>R</b></i><i class="y"><b>A</b></i><i class="g"><b>T</b></i><i class="c"><b>R</b></i><i class="c"><b>R</b></i><i class="y"><b>V</b></i><i class="c"><b>R</b></i><i class="p"><b>G</b></i><i class="p"><b>G</b></i><i class="r"><b>D</b></i></div>
<div class="row" style="top:418px"><i class="y"><b>M</b></i><i class="g"><b>S</b></i><i class="r"><b>D</b></i><i class="g"><b>N</b></i><i class="p"><b>G</b></i><i class="c"><b>P</b></i><i class="g"><b>Q</b></i><i class="w"><b>-</b></i><i class="g"><b>N</b></i><i class="g"><b>Q</b></i><i class="c"><b>R</b></i><i class="g"><b>S</b></i><i class="y"><b>A</b></i><i class="c"><b>P</b></i><i class="c"><b>R</b></i><i class="w"><b>-</b></i><i class="y"><b>I</b></i><i class="g"><b>T</b></i><i class="y"><b>F</b></i><i class="p"><b>G</b></i><i class="p"><b>G</b></i><i class="c"><b>P</b></i><i class="g"><b>T</b></i><i class="w"><b>-</b></i><i class="w"><b>-</b></i><i class="r"><b>D</b></i><i class="g"><b>S</b></i><i class="y"><b>A</b></i><i class="r"><b>D</b></i><i class="g"><b>N</b></i><i class="g"><b>N</b></i><i class="g"><b>Q</b></i><i class="r"><b>D</b></i><i class="p"><b>G</b></i><i class="p"><b>G</b></i><i class="c"><b>R</b></i><i class="g"><b>S</b></i><i class="p"><b>G</b></i><i class="y"><b>A</b></i><i class="c"><b>R</b></i><i class="c"><b>P</b></i><i class="c"><b>K</b></i><i class="g"><b>Q</b></i><i class="c"><b>R</b></i><i class="c"><b>R</b></i><i class="c"><b>P</b></i><i class="g"><b>Q</b></i><i class="p"><b>G</b></i><i class="y"><b>L</b></i><i class="c"><b>P</b></i><i class="g"><b>N</b></i><i class="g"><b>N</b></i><i class="g"><b>T</b></i><i class="y"><b>A</b></i><i class="g"><b>S</b></i><i class="g"><b>W</b></i><i class="y"><b>F</b></i><i class="g"><b>T</b></i><i class="y"><b>A</b></i><i class="y"><b>L</b></i><i class="g"><b>T</b></i><i class="g"><b>Q</b></i><i class="h"><b>H</b></i><i class="p"><b>G</b></i><i class="c"><b>K</b></i><i class="r"><b>E</b></i><i class="r"><b>E</b></i><i class="y"><b>L</b></i><i class="c"><b>R</b></i><i class="y"><b>F</b></i><i class="c"><b>P</b></i><i class="c"><b>R</b></i><i class="p"><b>G</b></i><i class="g"><b>Q</b></i><i class="p"><b>G</b></i><i class="y"><b>V</b></i><i class="c"><b>P</b></i><i class="y"><b>I</b></i><i class="g"><b>N</b></i><i class="g"><b>T</b></i><i class="g"><b>N</b></i><i class="g"><b>S</b></i><i class="p"><b>G</b></i><i class="c"><b>K</b></i><i class="r"><b>D</b></i><i class="r"><b>D</b></i><i class="g"><b>Q</b></i><i class="y"><b>I</b></i><i class="p"><b>G</b></i><i class="l"><b>Y</b></i><i class="l"><b>Y</b></i><i class="c"><b>R</b></i><i class="c"><b>R</b></i><i class="y"><b>A</b></i><i class="g"><b>T</b></i><i class="c"><b>R</b></i><i class="c"><b>R</b></i><i class="y"><b>V</b></i><i class="c"><b>R</b></i><i class="p"><b>G</b></i><i class="p"><b>G</b></i><i class="r"><b>D</b></i></div>
<div class="row" style="top:437px"><i class="y"><b>M</b></i><i class="g"><b>S</b></i><i class="r"><b>D</b></i><i class="g"><b>N</b></i><i class="p"><b>G</b></i><i class="c"><b>P</b></i><i class="g"><b>Q</b></i><i class="w"><b>-</b></i><i class="g"><b>S</b></i><i class="g"><b>Q</b></i><i class="c"><b>R</b></i><i class="g"><b>S</b></i><i class="y"><b>A</b></i><i class="c"><b>P</b></i><i class="c"><b>R</b></i><i class="w"><b>-</b></i><i class="y"><b>I</b></i><i class="g"><b>T</b></i><i class="y"><b>F</b></i><i class="p"><b>G</b></i><i class="p"><b>G</b></i><i class="c"><b>P</b></i><i class="g"><b>T</b></i><i class="w"><b>-</b></i><i class="w"><b>-</b></i><i class="r"><b>D</b></i><i class="g"><b>S</b></i><i class="y"><b>A</b></i><i class="r"><b>D</b></i><i class="g"><b>N</b></i><i class="g"><b>N</b></i><i class="g"><b>Q</b></i><i class="r"><b>D</b></i><i class="p"><b>G</b></i><i class="p"><b>G</b></i><i class="c"><b>R</b></i><i class="g"><b>S</b></i><i class="p"><b>G</b></i><i class="y"><b>A</b></i><i class="c"><b>R</b></i><i class="c"><b>P</b></i><i class="c"><b>K</b></i><i class="g"><b>Q</b></i><i class="c"><b>R</b></i><i class="c"><b>R</b></i><i class="c"><b>P</b></i><i class="g"><b>Q</b></i><i class="p"><b>G</b></i><i class="y"><b>L</b></i><i class="c"><b>P</b></i><i class="g"><b>N</b></i><i class="g"><b>N</b></i><i class="g"><b>T</b></i><i class="y"><b>A</b></i><i class="g"><b>S</b></i><i class="g"><b>W</b></i><i class="y"><b>F</b></i><i class="g"><b>T</b></i><i class="y"><b>A</b></i><i class="y"><b>L</b></i><i class="g"><b>T</b></i><i class="g"><b>Q</b></i><i class="h"><b>H</b></i><i class="p"><b>G</b></i><i class="c"><b>K</b></i><i class="r"><b>E</b></i><i class="r"><b>E</b></i><i class="y"><b>L</b></i><i class="c"><b>R</b></i><i class="y"><b>F</b></i><i class="c"><b>P</b></i><i class="c"><b>R</b></i><i class="p"><b>G</b></i><i class="g"><b>Q</b></i><i class="p"><b>G</b></i><i class="y"><b>V</b></i><i class="c"><b>P</b></i><i class="y"><b>I</b></i><i class="g"><b>N</b></i><i class="g"><b>T</b></i><i class="g"><b>N</b></i><i class="g"><b>S</b></i><i class="p"><b>G</b></i><i class="c"><b>K</b></i><i class="r"><b>D</b></i><i class="r"><b>D</b></i><i class="g"><b>Q</b></i><i class="y"><b>I</b></i><i class="p"><b>G</b></i><i class="l"><b>Y</b></i><i class="l"><b>Y</b></i><i class="c"><b>R</b></i><i class="c"><b>K</b></i><i class="y"><b>A</b></i><i class="g"><b>T</b></i><i class="c"><b>R</b></i><i class="c"><b>R</b></i><i class="y"><b>V</b></i><i class="c"><b>R</b></i><i class="p"><b>G</b></i><i class="p"><b>G</b></i><i class="r"><b>D</b></i></div>
<div class="row" style="top:456px"><i class="y"><b>M</b></i><i class="g"><b>S</b></i><i class="r"><b>D</b></i><i class="g"><b>N</b></i><i class="p"><b>G</b></i><i class="c"><b>P</b></i><i class="g"><b>Q</b></i><i class="w"><b>-</b></i><i class="g"><b>N</b></i><i class="g"><b>Q</b></i><i class="c"><b>R</b></i><i class="g"><b>S</b></i><i class="y"><b>A</b></i><i class="c"><b>P</b></i><i class="c"><b>R</b></i><i class="w"><b>-</b></i><i class="y"><b>I</b></i><i class="g"><b>T</b></i><i class="y"><b>F</b></i><i class="p"><b>G</b></i><i class="p"><b>G</b></i><i class="c"><b>P</b></i><i class="g"><b>S</b></i><i class="w"><b>-</b></i><i class="w"><b>-</b></i><i class="r"><b>D</b></i><i class="g"><b>S</b></i><i class="g"><b>T</b></i><i class="r"><b>D</b></i><i class="g"><b>N</b></i><i class="g"><b>N</b></i><i class="g"><b>Q</b></i><i class="r"><b>D</b></i><i class="p"><b>G</b></i><i class="p"><b>G</b></i><i class="c"><b>R</b></i><i class="g"><b>S</b></i><i class="p"><b>G</b></i><i class="y"><b>A</b></i><i class="c"><b>R</b></i><i class="c"><b>P</b></i><i class="c"><b>K</b></i><i class="g"><b>Q</b></i><i class="c"><b>R</b></i><i class="c"><b>R</b></i><i class="c"><b>P</b></i><i class="g"><b>Q</b></i><i class="p"><b>G</b></i><i class="y"><b>L</b></i><i class="c"><b>P</b></i><i class="g"><b>N</b></i><i class="g"><b>N</b></i><i class="g"><b>T</b></i><i class="y"><b>A</b></i><i class="g"><b>S</b></i><i class="g"><b>W</b></i><i class="y"><b>F</b></i><i class="g"><b>T</b></i><i class="y"><b>A</b></i><i class="y"><b>L</b></i><i class="g"><b>T</b></i><i class="g"><b>Q</b></i><i class="h"><b>H</b></i><i class="p"><b>G</b></i><i class="c"><b>K</b></i><i class="r"><b>E</b></i><i class="r"><b>E</b></i><i class="y"><b>L</b></i><i class="c"><b>R</b></i><i class="y"><b>F</b></i><i class="c"><b>P</b></i><i class="c"><b>R</b></i><i class="p"><b>G</b></i><i class="g"><b>Q</b></i><i class="p"><b>G</b></i><i class="y"><b>V</b></i><i class="c"><b>P</b></i><i class="y"><b>I</b></i><i class="g"><b>N</b></i><i class="g"><b>T</b></i><i class="g"><b>N</b></i><i class="g"><b>S</b></i><i class="p"><b>G</b></i><i class="c"><b>K</b></i><i class="r"><b>D</b></i><i class="r"><b>D</b></i><i class="g"><b>Q</b></i><i class="y"><b>I</b></i><i class="p"><b>G</b></i><i class="l"><b>Y</b></i><i class="l"><b>Y</b></i><i class="c"><b>R</b></i><i class="c"><b>R</b></i><i class="y"><b>A</b></i><i class="g"><b>T</b></i><i class="c"><b>R</b></i><i class="c"><b>R</b></i><i class="y"><b>V</b></i><i class="c"><b>R</b></i><i class="p"><b>G</b></i><i class="p"><b>G</b></i><i class="r"><b>D</b></i></div>
<div class="row" style="top:475px"><i class="y"><b>M</b></i><i class="g"><b>S</b></i><i class="r"><b>D</b></i><i class="g"><b>N</b></i><i class="p"><b>G</b></i><i class="c"><b>P</b></i><i class="g"><b>Q</b></i><i class="w"><b>-</b></i><i class="g"><b>N</b></i><i class="g"><b>Q</b></i><i class="c"><b>R</b></i><i class="g"><b>S</b></i><i class="y"><b>A</b></i><i class="c"><b>P</b></i><i class="c"><b>R</b></i><i class="w"><b>-</b></i><i class="y"><b>I</b></i><i class="g"><b>T</b></i><i class="y"><b>F</b></i><i class="p"><b>G</b></i><i class="p"><b>G</b></i><i class="c"><b>P</b></i><i class="g"><b>S</b></i><i class="w"><b>-</b></i><i class="w"><b>-</b></i><i class="r"><b>D</b></i><i class="g"><b>S</b></i><i class="g"><b>T</b></i><i class="r"><b>D</b></i><i class="g"><b>N</b></i><i class="g"><b>N</b></i><i class="g"><b>Q</b></i><i class="r"><b>D</b></i><i class="p"><b>G</b></i><i class="p"><b>G</b></i><i class="c"><b>R</b></i><i class="g"><b>S</b></i><i class="p"><b>G</b></i><i class="y"><b>A</b></i><i class="c"><b>R</b></i><i class="c"><b>P</b></i><i class="c"><b>K</b></i><i class="g"><b>Q</b></i><i class="c"><b>R</b></i><i class="c"><b>R</b></i><i class="c"><b>P</b></i><i class="g"><b>Q</b></i><i class="p"><b>G</b></i><i class="y"><b>L</b></i><i class="c"><b>P</b></i><i class="g"><b>N</b></i><i class="g"><b>N</b></i><i class="g"><b>T</b></i><i class="y"><b>A</b></i><i class="g"><b>S</b></i><i class="g"><b>W</b></i><i class="y"><b>F</b></i><i class="g"><b>T</b></i><i class="y"><b>A</b></i><i class="y"><b>L</b></i><i class="g"><b>T</b></i><i class="g"><b>Q</b></i><i class="h"><b>H</b></i><i class="p"><b>G</b></i><i class="c"><b>K</b></i><i class="r"><b>E</b></i><i class="r"><b>E</b></i><i class="y"><b>L</b></i><i class="c"><b>R</b></i><i class="y"><b>F</b></i><i class="c"><b>P</b></i><i class="c"><b>R</b></i><i class="p"><b>G</b></i><i class="g"><b>Q</b></i><i class="p"><b>G</b></i><i class="y"><b>V</b></i><i class="c"><b>P</b></i><i class="y"><b>I</b></i><i class="g"><b>N</b></i><i class="g"><b>T</b></i><i class="g"><b>N</b></i><i class="g"><b>S</b></i><i class="p"><b>G</b></i><i class="c"><b>K</b></i><i class="r"><b>D</b></i><i class="r"><b>D</b></i><i class="g"><b>Q</b></i><i class="y"><b>I</b></i><i class="p"><b>G</b></i><i class="l"><b>Y</b></i><i class="l"><b>Y</b></i><i class="c"><b>R</b></i><i class="c"><b>R</b></i><i class="y"><b>A</b></i><i class="g"><b>T</b></i><i class="c"><b>R</b></i><i class="c"><b>R</b></i><i class="y"><b>V</b></i><i class="c"><b>R</b></i><i class="p"><b>G</b></i><i class="p"><b>G</b></i><i class="r"><b>D</b></i></div>
<div class="row" style="top:494px"><i class="y"><b>M</b></i><i class="g"><b>S</b></i><i class="r"><b>D</b></i><i class="g"><b>N</b></i><i class="p"><b>G</b></i><i class="c"><b>P</b></i><i class="g"><b>Q</b></i><i class="w"><b>-</b></i><i class="g"><b>N</b></i><i class="g"><b>Q</b></i><i class="c"><b>R</b></i><i class="g"><b>S</b></i><i class="y"><b>A</b></i><i class="c"><b>P</b></i><i class="c"><b>R</b></i><i class="w"><b>-</b></i><i class="y"><b>I</b></i><i class="g"><b>T</b></i><i class="y"><b>F</b></i><i class="p"><b>G</b></i><i class="p"><b>G</b></i><i class="c"><b>P</b></i><i class="g"><b>S</b></i><i class="w"><b>-</b></i><i class="w"><b>-</b></i><i class="r"><b>D</b></i><i class="g"><b>S</b></i><i class="g"><b>T</b></i><i class="r"><b>D</b></i><i class="g"><b>N</b></i><i class="g"><b>N</b></i><i class="g"><b>Q</b></i><i class="r"><b>D</b></i><i class="p"><b>G</b></i><i class="p"><b>G</b></i><i class="c"><b>R</b></i><i class="g"><b>S</b></i><i class="p"><b>G</b></i><i class="y"><b>A</b></i><i class="c"><b>R</b></i><i class="c"><b>P</b></i><i class="c"><b>K</b></i><i class="g"><b>Q</b></i><i class="c"><b>R</b></i><i class="c"><b>R</b></i><i class="c"><b>P</b></i><i class="g"><b>Q</b></i><i class="p"><b>G</b></i><i class="y"><b>L</b></i><i class="c"><b>P</b></i><i class="g"><b>N</b></i><i class="g"><b>N</b></i><i class="g"><b>T</b></i><i class="y"><b>A</b></i><i class="g"><b>S</b></i><i class="g"><b>W</b></i><i class="y"><b>F</b></i><i class="g"><b>T</b></i><i class="y"><b>A</b></i><i class="y"><b>L</b></i><i class="g"><b>T</b></i><i class="g"><b>Q</b></i><i class="h"><b>H</b></i><i class="p"><b>G</b></i><i class="c"><b>K</b></i><i class="r"><b>E</b></i><i class="r"><b>E</b></i><i class="y"><b>L</b></i><i class="c"><b>R</b></i><i class="y"><b>F</b></i><i class="c"><b>P</b></i><i class="c"><b>R</b></i><i class="p"><b>G</b></i><i class="g"><b>Q</b></i><i class="p"><b>G</b></i><i class="y"><b>V</b></i><i class="c"><b>P</b></i><i class="y"><b>I</b></i><i class="g"><b>N</b></i><i class="g"><b>T</b></i><i class="g"><b>N</b></i><i class="g"><b>S</b></i><i class="p"><b>G</b></i><i class="c"><b>K</b></i><i class="r"><b>D</b></i><i class="r"><b>D</b></i><i class="g"><b>Q</b></i><i class="y"><b>I</b></i><i class="p"><b>G</b></i><i class="l"><b>Y</b></i><i class="l"><b>Y</b></i><i class="c"><b>R</b></i><i class="c"><b>R</b></i><i class="y"><b>A</b></i><i class="g"><b>T</b></i><i class="c"><b>R</b></i><i class="c"><b>R</b></i><i class="y"><b>V</b></i><i class="c"><b>R</b></i><i class="p"><b>G</b></i><i class="p"><b>G</b></i><i class="r"><b>D</b></i></div>
<div class="row" style="top:513px"><i class="y"><b>M</b></i><i class="g"><b>S</b></i><i class="r"><b>D</b></i><i class="g"><b>N</b></i><i class="p"><b>G</b></i><i class="c"><b>P</b></i><i class="g"><b>Q</b></i><i class="w"><b>-</b></i><i class="g"><b>N</b></i><i class="g"><b>Q</b></i><i class="c"><b>R</b></i><i class="g"><b>S</b></i><i class="y"><b>A</b></i><i class="c"><b>P</b></i><i class="c"><b>R</b></i><i class="w"><b>-</b></i><i class="y"><b>I</b></i><i class="g"><b>T</b></i><i class="y"><b>F</b></i><i class="p"><b>G</b></i><i class="p"><b>G</b></i><i class="c"><b>P</b></i><i class="g"><b>S</b></i><i class="w"><b>-</b></i><i class="w"><b>-</b></i><i class="r"><b>D</b></i><i class="g"><b>S</b></i><i class="g"><b>T</b></i><i class="r"><b>D</b></i><i class="g"><b>N</b></i><i class="g"><b>N</b></i><i class="g"><b>Q</b></i><i class="r"><b>D</b></i><i class="p"><b>G</b></i><i class="p"><b>G</b></i><i class="c"><b>R</b></i><i class="g"><b>S</b></i><i class="p"><b>G</b></i><i class="y"><b>A</b></i><i class="c"><b>R</b></i><i class="c"><b>P</b></i><i class="c"><b>K</b></i><i class="g"><b>Q</b></i><i class="c"><b>R</b></i><i class="c"><b>R</b></i><i class="c"><b>P</b></i><i class="g"><b>Q</b></i><i class="p"><b>G</b></i><i class="y"><b>L</b></i><i class="c"><b>P</b></i><i class="g"><b>N</b></i><i class="g"><b>N</b></i><i class="g"><b>T</b></i><i class="y"><b>A</b></i><i class="g"><b>S</b></i><i class="g"><b>W</b></i><i class="y"><b>F</b></i><i class="g"><b>T</b></i><i class="y"><b>A</b></i><i class="y"><b>L</b></i><i class="g"><b>T</b></i><i class="g"><b>Q</b></i><i class="h"><b>H</b></i><i class="p"><b>G</b></i><i class="c"><b>K</b></i><i class="r"><b>E</b></i><i class="r"><b>E</b></i><i class="y"><b>L</b></i><i class="c"><b>R</b></i><i class="y"><b>F</b></i><i class="c"><b>P</b></i><i class="c"><b>R</b></i><i class="p"><b>G</b></i><i class="g"><b>Q</b></i><i class="p"><b>G</b></i><i class="y"><b>V</b></i><i class="c"><b>P</b></i><i class="y"><b>I</b></i><i class="g"><b>N</b></i><i class="g"><b>T</b></i><i class="g"><b>N</b></i><i class="g"><b>S</b></i><i class="p"><b>G</b></i><i class="c"><b>K</b></i><i class="r"><b>D</b></i><i class="r"><b>D</b></i><i class="g"><b>Q</b></i><i class="y"><b>I</b></i><i class="p"><b>G</b></i><i class="l"><b>Y</b></i><i class="l"><b>Y</b></i><i class="c"><b>R</b></i><i class="c"><b>R</b></i><i class="y"><b>A</b></i><i class="g"><b>T</b></i><i class="c"><b>R</b></i><i class="c"><b>R</b></i><i class="y"><b>V</b></i><i class="c"><b>R</b></i><i class="p"><b>G</b></i><i class="p"><b>G</b></i><i class="r"><b>D</b></i></div>
<div class="row" style="top:532px"><i class="y"><b>M</b></i><i class="g"><b>S</b></i><i class="r"><b>D</b></i><i class="g"><b>N</b></i><i class="p"><b>G</b></i><i class="c"><b>P</b></i><i class="h"><b>H</b></i><i class="w"><b>-</b></i><i class="g"><b>N</b></i><i class="g"><b>Q</b></i><i class="c"><b>R</b></i><i class="g"><b>S</b></i><i class="y"><b>A</b></i><i class="g"><b>S</b></i><i class="c"><b>R</b></i><i class="w"><b>-</b></i><i class="y"><b>I</b></i><i class="g"><b>T</b></i><i class="y"><b>F</b></i><i class="p"><b>G</b></i><i class="p"><b>G</b></i><i class="c"><b>P</b></i><i class="g"><b>T</b></i><i class="w"><b>-</b></i><i class="w"><b>-</b></i><i class="r"><b>D</b></i><i class="g"><b>S</b></i><i class="g"><b>T</b></i><i class="r"><b>D</b></i><i class="g"><b>N</b></i><i class="g"><b>N</b></i><i class="g"><b>Q</b></i><i class="g"><b>N</b></i><i class="p"><b>G</b></i><i class="p"><b>G</b></i><i class="c"><b>R</b></i><i class="g"><b>N</b></i><i class="p"><b>G</b></i><i class="y"><b>A</b></i><i class="c"><b>R</b></i><i class="c"><b>P</b></i><i class="c"><b>K</b></i><i class="g"><b>Q</b></i><i class="c"><b>R</b></i><i class="c"><b>R</b></i><i class="c"><b>P</b></i><i class="g"><b>Q</b></i><i class="p"><b>G</b></i><i class="y"><b>L</b></i><i class="c"><b>P</b></i><i class="g"><b>N</b></i><i class="g"><b>N</b></i><i class="g"><b>T</b></i><i class="y"><b>A</b></i><i class="g"><b>S</b></i><i class="g"><b>W</b></i><i class="y"><b>F</b></i><i class="g"><b>T</b></i><i class="y"><b>A</b></i><i class="y"><b>L</b></i><i class="g"><b>T</b></i><i class="g"><b>Q</b></i><i class="h"><b>H</b></i><i class="p"><b>G</b></i><i class="c"><b>K</b></i><i class="r"><b>E</b></i><i class="r"><b>E</b></i><i class="y"><b>L</b></i><i class="c"><b>R</b></i><i class="y"><b>F</b></i><i class="c"><b>P</b></i><i class="g"><b>Q</b></i><i class="p"><b>G</b></i><i class="g"><b>Q</b></i><i class="p"><b>G</b></i><i class="y"><b>V</b></i><i class="c"><b>P</b></i><i class="y"><b>I</b></i><i class="g"><b>N</b></i><i class="g"><b>T</b></i><i class="g"><b>N</b></i><i class="g"><b>S</b></i><i class="p"><b>G</b></i><i class="c"><b>P</b></i><i class="r"><b>D</b></i><i class="r"><b>D</b></i><i class="g"><b>Q</b></i><i class="y"><b>I</b></i><i class="p"><b>G</b></i><i class="l"><b>Y</b></i><i class="l"><b>Y</b></i><i class="c"><b>R</b></i><i class="c"><b>R</b></i><i class="y"><b>A</b></i><i class="g"><b>T</b></i><i class="c"><b>R</b></i><i class="c"><b>R</b></i><i class="y"><b>V</b></i><i class="c"><b>R</b></i><i class="p"><b>G</b></i><i class="p"><b>G</b></i><i class="r"><b>D</b></i></div>
<div class="row" style="top:551px"><i class="y"><b>M</b></i><i class="g"><b>S</b></i><i class="r"><b>D</b></i><i class="g"><b>N</b></i><i class="p"><b>G</b></i><i class="c"><b>P</b></i><i class="h"><b>H</b></i><i class="w"><b>-</b></i><i class="g"><b>N</b></i><i class="g"><b>Q</b></i><i class="c"><b>R</b></i><i class="g"><b>S</b></i><i class="y"><b>A</b></i><i class="g"><b>S</b></i><i class="c"><b>R</b></i><i class="w"><b>-</b></i><i class="y"><b>I</b></i><i class="g"><b>T</b></i><i class="y"><b>F</b></i><i class="p"><b>G</b></i><i class="p"><b>G</b></i><i class="c"><b>P</b></i><i class="g"><b>T</b></i><i class="w"><b>-</b></i><i class="w"><b>-</b></i><i class="r"><b>D</b></i><i class="g"><b>S</b></i><i class="g"><b>T</b></i><i class="r"><b>D</b></i><i class="g"><b>N</b></i><i class="g"><b>N</b></i><i class="g"><b>Q</b></i><i class="g"><b>N</b></i><i class="p"><b>G</b></i><i class="p"><b>G</b></i><i class="c"><b>R</b></i><i class="g"><b>N</b></i><i class="p"><b>G</b></i><i class="y"><b>A</b></i><i class="c"><b>R</b></i><i class="c"><b>P</b></i><i class="c"><b>K</b></i><i class="g"><b>Q</b></i><i class="c"><b>R</b></i><i class="c"><b>R</b></i><i class="c"><b>P</b></i><i class="g"><b>Q</b></i><i class="p"><b>G</b></i><i class="y"><b>L</b></i><i class="c"><b>P</b></i><i class="g"><b>N</b></i><i class="g"><b>N</b></i><i class="g"><b>T</b></i><i class="y"><b>A</b></i><i class="g"><b>S</b></i><i class="g"><b>W</b></i><i class="y"><b>F</b></i><i class="g"><b>T</b></i><i class="y"><b>A</b></i><i class="y"><b>L</b></i><i class="g"><b>T</b></i><i class="g"><b>Q</b></i><i class="h"><b>H</b></i><i class="p"><b>G</b></i><i class="c"><b>K</b></i><i class="r"><b>E</b></i><i class="r"><b>E</b></i><i class="y"><b>L</b></i><i class="c"><b>R</b></i><i class="y"><b>F</b></i><i class="c"><b>P</b></i><i class="g"><b>Q</b></i><i class="p"><b>G</b></i><i class="g"><b>Q</b></i><i class="p"><b>G</b></i><i class="y"><b>V</b></i><i class="c"><b>P</b></i><i class="y"><b>I</b></i><i class="g"><b>N</b></i><i class="g"><b>T</b></i><i class="g"><b>N</b></i><i class="g"><b>S</b></i><i class="p"><b>G</b></i><i class="c"><b>P</b></i><i class="r"><b>D</b></i><i class="r"><b>D</b></i><i class="g"><b>Q</b></i><i class="y"><b>I</b></i><i class="p"><b>G</b></i><i class="l"><b>Y</b></i><i class="l"><b>Y</b></i><i class="c"><b>R</b></i><i class="c"><b>R</b></i><i class="y"><b>A</b></i><i class="g"><b>T</b></i><i class="c"><b>R</b></i><i class="c"><b>R</b></i><i class="y"><b>V</b></i><i class="c"><b>R</b></i><i class="p"><b>G</b></i><i class="p"><b>G</b></i><i class="r"><b>D</b></i></div>
<div class="row" style="top:570px"><i class="y"><b>M</b></i><i class="g"><b>S</b></i><i class="r"><b>D</b></i><i class="g"><b>N</b></i><i class="p"><b>G</b></i><i class="c"><b>P</b></i><i class="g"><b>Q</b></i><i class="g"><b>Q</b></i><i class="g"><b>N</b></i><i class="g"><b>Q</b></i><i class="c"><b>R</b></i><i class="g"><b>S</b></i><i class="y"><b>A</b></i><i class="c"><b>P</b></i><i class="c"><b>R</b></i><i class="w"><b>-</b></i><i class="y"><b>I</b></i><i class="g"><b>T</b></i><i class="y"><b>F</b></i><i class="p"><b>G</b></i><i class="p"><b>G</b></i><i class="c"><b>P</b></i><i class="g"><b>T</b></i><i class="w"><b>-</b></i><i class="w"><b>-</b></i><i class="r"><b>D</b></i><i class="g"><b>S</b></i><i class="y"><b>A</b></i><i class="r"><b>D</b></i><i class="g"><b>N</b></i><i class="g"><b>N</b></i><i class="g"><b>Q</b></i><i class="r"><b>D</b></i><i class="p"><b>G</b></i><i class="p"><b>G</b></i><i class="c"><b>R</b></i><i class="g"><b>S</b></i><i class="p"><b>G</b></i><i class="y"><b>A</b></i><i class="c"><b>R</b></i><i class="c"><b>P</b></i><i class="c"><b>K</b></i><i class="g"><b>Q</b></i><i class="c"><b>R</b></i><i class="c"><b>R</b></i><i class="c"><b>P</b></i><i class="g"><b>Q</b></i><i class="p"><b>G</b></i><i class="y"><b>L</b></i><i class="c"><b>P</b></i><i class="g"><b>N</b></i><i class="g"><b>N</b></i><i class="g"><b>T</b></i><i class="y"><b>A</b></i><i class="g"><b>S</b></i><i class="g"><b>W</b></i><i class="y"><b>F</b></i><i class="g"><b>T</b></i><i class="y"><b>A</b></i><i class="y"><b>L</b></i><i class="g"><b>T</b></i><i class="g"><b>Q</b></i><i class="h"><b>H</b></i><i class="p"><b>G</b></i><i class="c"><b>K</b></i><i class="r"><b>E</b></i><i class="r"><b>E</b></i><i class="y"><b>L</b></i><i class="c"><b>R</b></i><i class="y"><b>F</b></i><i class="c"><b>P</b></i><i class="c"><b>R</b></i><i class="p"><b>G</b></i><i class="g"><b>Q</b></i><i class="p"><b>G</b></i><i class="y"><b>V</b></i><i class="c"><b>P</b></i><i class="y"><b>I</b></i><i class="g"><b>N</b></i><i class="g"><b>T</b></i><i class="g"><b>N</b></i><i class="g"><b>S</b></i><i class="p"><b>G</b></i><i class="c"><b>K</b></i><i class="r"><b>D</b></i><i class="r"><b>D</b></i><i class="g"><b>Q</b></i><i class="y"><b>I</b></i><i class="p"><b>G</b></i><i class="l"><b>Y</b></i><i class="l"><b>Y</b></i><i class="c"><b>R</b></i><i class="c"><b>R</b></i><i class="y"><b>A</b></i><i class="g"><b>T</b></i><i class="c"><b>R</b></i><i class="c"><b>R</b></i><i class="y"><b>V</b></i><i class="c"><b>R</b></i><i class="p"><b>G</b></i><i class="p"><b>G</b></i><i class="r"><b>D</b></i></div></div><div id="labs" class="abs"><div class="lab" style="top:0px">1. ABN10891.1_Nucleocapsid</div><div class="lab" style="top:19px">2. YP_001039969.1_nucleocapsid</div><div class="lab" style="top:38px">3. AGP04908.1_nucleocapsid</div><div class="lab" style="top:57px">4. QHA24694.1_nucleocapsid</div><div class="lab" style="top:76px">5. AHL18098.1_N_Middle</div><div class="lab" style="top:95px">6. AHY22571.1_N_protein</div><div class="lab" style="top:114px">7. AHY61344.1_nucleocapsid</div><div class="lab" style="top:133px">8. ASL68960.1_nucleocapsid</div><div class="lab" style="top:152px">9. AAS01074.1_nucleocapsid</div><div class="lab" style="top:171px">10. YP_009724397.2_nucleocapsid</div><div class="lab" style="top:190px">11. QHR63308.1_nucleocapsid</div><div class="lab" style="top:209px">12. AVP78049.1_nucleocapsid</div><div class="lab" style="top:228px">13. APO40586.1_N_protein</div><div class="lab" style="top:247px">14. AIA62285.1_nucleocapsid</div><div class="lab" style="top:266px">15. ABD75315.1_nucleocapsid</div><div class="lab" style="top:285px">16. AIA62298.1_nucleocapsid</div><div class="lab" style="top:304px">17. ABG47067.1_nucleocapsid</div><div class="lab" style="top:323px">18. ADE34820.1_nucleocapsid</div><div class="lab" style="top:342px">19. Q3LZX4.1_RecName</div><div class="lab" style="top:361px">20. AAZ41337.1_nucleocapsid</div><div class="lab" style="top:380px">21. ADE34730.1_nucleocapsid</div><div class="lab" style="top:399px">22. ADE34787.1_nucleocapsid</div><div class="lab" style="top:418px">23. ACU31047.1_nucleocapsid</div><div class="lab" style="top:437px">24. AID16719.1_nucleocapsid</div><div class="lab" style="top:456px">25. AIA62318.1_nucleocapsid</div><div class="lab" style="top:475px">26. AGC74169.1_nucleocapsid</div><div class="lab" style="top:494px">27. AAZ67039.1_nucleocapsid</div><div class="lab" style="top:513px">28. Q0Q468.1_RecName</div><div class="lab" style="top:532px">29. AKZ19095.1_nucleocapsid</div><div class="lab" style="top:551px">30. AKZ19084.1_nucleocapsid</div><div class="lab" style="top:570px">31. AGC74175.1_nucleocapsid</div>
</div>
<div id="vs" class="abs"></div>
<svg class="abs" style="left:1347px;top:104px" width="11" height="8" viewBox="0 0 11 8"><path d="M1.5 6.5 5.5 2.5 9.5 6.5z" fill="#3a3a3a"/></svg>
<div class="abs" style="left:1344px;top:119px;width:16px;height:261px;border:1px solid #9a9a9a;border-radius:2px;background:linear-gradient(90deg,#f6f6f6 0,#ececec 45%,#d8d8d8 55%,#cfcfcf 100%)"></div>
<svg class="abs" style="left:1348px;top:245px" width="8" height="8" viewBox="0 0 8 8"><path d="M0.5 1.5h7M0.5 3.5h7M0.5 5.5h7" stroke="#555" stroke-width="1"/></svg>
<svg class="abs" style="left:1347px;top:694px" width="11" height="8" viewBox="0 0 11 8"><path d="M1.5 1.5 5.5 5.5 9.5 1.5z" fill="#3a3a3a"/></svg>
<div id="hs" class="abs"></div>
<svg class="abs" style="left:10px;top:710px" width="8" height="11" viewBox="0 0 8 11"><path d="M6.5 1.5 2.5 5.5 6.5 9.5z" fill="#3a3a3a"/></svg>
<svg class="abs" style="left:1332px;top:710px" width="8" height="11" viewBox="0 0 8 11"><path d="M1.5 1.5 5.5 5.5 1.5 9.5z" fill="#3a3a3a"/></svg>
<div class="abs" style="left:24px;top:708px;width:310px;height:15px;border:1px solid #9a9a9a;border-radius:2px;background:linear-gradient(180deg,#f6f6f6 0,#ececec 45%,#d8d8d8 55%,#cfcfcf 100%)"></div>
<svg class="abs" style="left:174px;top:711px" width="10" height="9" viewBox="0 0 10 9"><path d="M1.5 0.5v8M4.5 0.5v8M7.5 0.5v8" stroke="#555" stroke-width="1"/></svg>
<div id="bottomsep" class="abs"></div>
<div class="abs" style="left:1364px;top:96px;width:2px;height:633px;background:linear-gradient(90deg,#8a8a8a,#5e5e5e)"></div>
<div class="abs" style="left:1365px;top:729px;width:1px;height:37px;background:#6e6e6e"></div>
<div class="abs" style="left:1365px;top:44px;width:1px;height:30px;background:#a0a0a0"></div>
<div class="abs" style="left:1343px;top:707px;width:18px;height:18px;background:#F0F0F0"></div>
<div id="sitetxt" class="abs">Site #</div>
<div id="sitebox" class="abs"></div>
<div id="sitev" class="abs">1</div>
<div class="abs" style="left:241px;top:733px;width:17px;height:9px;background:#F0F0F0;border-style:solid;border-width:1px 2px 2px 1px;border-color:#fff #6e6e6e #6e6e6e #fff"></div>
<div class="abs" style="left:241px;top:742px;width:17px;height:10px;background:#F0F0F0;border-style:solid;border-width:1px 2px 2px 1px;border-color:#fff #6e6e6e #6e6e6e #fff"></div>
<svg class="abs" style="left:245px;top:734px" width="10" height="18" viewBox="0 0 10 18"><path d="M2,5.6 H7 L4.5,3.1 Z M2,11 H7 L4.5,13.5 Z" fill="#111"/></svg>
<svg class="abs" style="left:280px;top:737px" width="14" height="14" viewBox="0 0 14 14"><circle cx="6.5" cy="6.5" r="5.3" fill="#fff" stroke="#fff" stroke-width="1.4"/><path d="M2.7,10.3 A5.3,5.3 0 0 1 10.3,2.7" fill="none" stroke="#7a7a7a" stroke-width="1.4"/><circle cx="6.5" cy="6.5" r="2" fill="#111"/></svg>
<div class="abs" style="left:298px;top:737px;font-size:12px">with</div>
<svg class="abs" style="left:360px;top:737px" width="14" height="14" viewBox="0 0 14 14"><circle cx="6.5" cy="6.5" r="5.3" fill="#fff" stroke="#fff" stroke-width="1.4"/><path d="M2.7,10.3 A5.3,5.3 0 0 1 10.3,2.7" fill="none" stroke="#7a7a7a" stroke-width="1.4"/></svg>
<div class="abs" style="left:378px;top:737px;font-size:12px">w/o gaps</div>
<div class="abs" style="left:0;top:765px;width:1366px;height:1px;background:#fff"></div>
<div class="abs" style="left:0;top:766px;width:1366px;height:1px;background:#4e4c5c"></div>
<div class="abs" style="left:0;top:767px;width:1366px;height:1px;background:#d6cae2"></div>
<div class="abs" style="left:121px;top:767px;width:59px;height:1px;background:#fff"></div>
<div class="abs" style="left:245px;top:767px;width:59px;height:1px;background:#fff"></div>
<div class="abs" style="left:307px;top:767px;width:59px;height:1px;background:#fff"></div>
<div class="abs" style="left:369px;top:767px;width:60px;height:1px;background:#fff"></div>
<div class="abs" style="left:431px;top:767px;width:59px;height:1px;background:#fff"></div>
</body></html>
